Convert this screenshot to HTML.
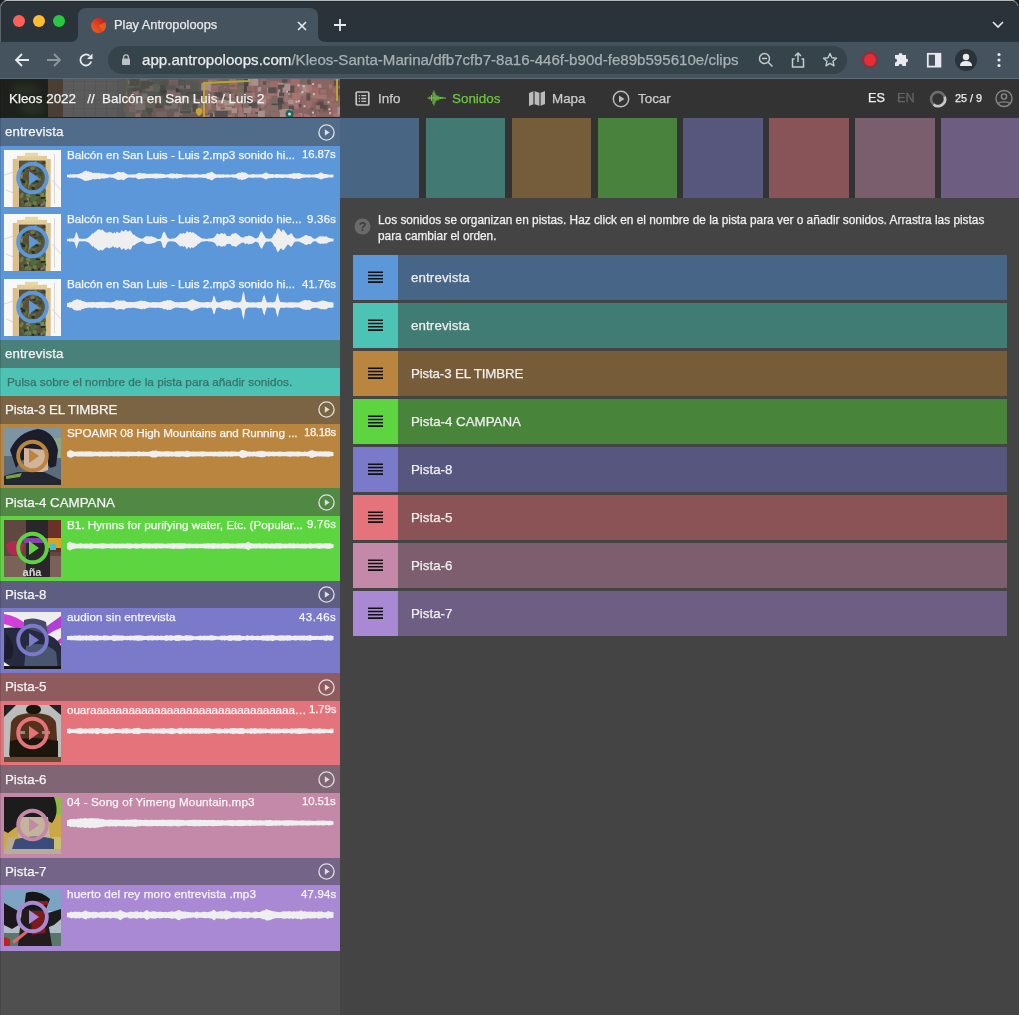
<!DOCTYPE html><html><head><meta charset="utf-8"><style>
*{margin:0;padding:0;box-sizing:border-box}
html,body{width:1019px;height:1015px;overflow:hidden;background:#444;font-family:"Liberation Sans",sans-serif}
.abs{position:absolute}
.t{position:absolute;white-space:nowrap;line-height:1}
body{-webkit-font-smoothing:antialiased}
.t,.tx{will-change:transform;-webkit-text-stroke:0.25px currentColor}
</style></head><body>

<div class="abs" style="left:0;top:0;width:1019px;height:42px;background:#2a3339"></div>
<div class="abs" style="left:0;top:0;width:1019px;height:1px;background:#b3b8bb"></div>
<div class="abs" style="left:0;top:1px;width:1019px;height:1px;background:#222b30"></div>
<div class="abs" style="left:0;top:1px;width:1px;height:77px;background:#5a6469"></div>
<svg class="abs" style="left:0;top:0" width="6" height="6"><path d="M0 0H6Q1 1 0 6Z" fill="#1a1f22"/><path d="M6 1Q1.5 1.5 1 6" stroke="#7d8589" stroke-width="1" fill="none"/></svg>
<svg class="abs" style="left:1013px;top:0" width="6" height="6"><path d="M6 0H0Q5 1 6 6Z" fill="#1a1f22"/><path d="M0 1Q4.5 1.5 5 6" stroke="#7d8589" stroke-width="1" fill="none"/></svg>
<div class="abs" style="left:13px;top:15px;width:12px;height:12px;border-radius:50%;background:#fe5f57"></div>
<div class="abs" style="left:33px;top:15px;width:12px;height:12px;border-radius:50%;background:#febc2e"></div>
<div class="abs" style="left:53px;top:15px;width:12px;height:12px;border-radius:50%;background:#28c840"></div>
<div class="abs" style="left:78px;top:8px;width:240px;height:35px;background:#44535d;border-radius:8px 8px 0 0"></div>
<svg class="abs" style="left:70px;top:34px" width="8" height="8"><path d="M0 8 Q8 8 8 0 L8 8Z" fill="#44535d"/></svg>
<svg class="abs" style="left:318px;top:34px" width="8" height="8"><path d="M8 8 Q0 8 0 0 L0 8Z" fill="#44535d"/></svg>
<svg class="abs" style="left:90.5px;top:17.5px" width="15" height="15"><defs><linearGradient id="fav" x1="1" y1="0" x2="0" y2="1"><stop offset="0" stop-color="#c8141e"/><stop offset="1" stop-color="#f06a1e"/></linearGradient></defs><circle cx="7.5" cy="7.5" r="7.5" fill="url(#fav)"/><path d="M7.5 7.5L14.2 4.2A7.5 7.5 0 0 1 12 13.5Z" fill="#f0641e" opacity="0.8"/></svg>
<div class="t" style="left:114px;top:19px;font-size:12.8px;color:#e8eaed">Play Antropoloops</div>
<svg class="abs" style="left:297px;top:21px" width="10" height="10"><path d="M1 1L9 9M9 1L1 9" stroke="#e8eaed" stroke-width="1.6"/></svg>
<svg class="abs" style="left:334px;top:19px" width="12" height="12"><path d="M6 0V12M0 6H12" stroke="#e8eaed" stroke-width="1.8"/></svg>
<svg class="abs" style="left:992px;top:21px" width="12" height="8"><path d="M1 1L6 6L11 1" stroke="#e8eaed" stroke-width="1.6" fill="none"/></svg>
<div class="abs" style="left:0;top:42px;width:1019px;height:36px;background:#44535d"></div>
<div class="abs" style="left:0;top:78px;width:1019px;height:1px;background:#5d6a72"></div>
<svg class="abs" style="left:14px;top:52px" width="16" height="16"><path d="M15 8H2M8 2L2 8L8 14" stroke="#e8eaed" stroke-width="1.8" fill="none"/></svg>
<svg class="abs" style="left:46px;top:52px" width="16" height="16"><path d="M1 8H14M8 2L14 8L8 14" stroke="#8d989e" stroke-width="1.8" fill="none"/></svg>
<svg class="abs" style="left:78px;top:52px" width="16" height="16"><path d="M13.2 9.5A5.5 5.5 0 1 1 11.5 3.8" stroke="#e8eaed" stroke-width="1.8" fill="none"/><path d="M14.5 1.5V7H9Z" fill="#e8eaed"/></svg>
<div class="abs" style="left:108px;top:46px;width:739px;height:28px;border-radius:14px;background:#35434b"></div>
<svg class="abs" style="left:121px;top:53px" width="10" height="13"><path d="M2.6 6V4.2A2.4 2.4 0 0 1 7.4 4.2V6" stroke="#bcc0c3" stroke-width="1.3" fill="none"/><rect x="1" y="5.5" width="8" height="6.5" rx="0.8" fill="#bcc0c3"/></svg>
<div class="t" style="left:142px;top:52px;font-size:15.1px;color:#e8eaed">app.antropoloops.com<span style="color:#a8b0b5">/Kleos-Santa-Marina/dfb7cfb7-8a16-446f-b90d-fe89b595610e/clips</span></div>
<svg class="abs" style="left:758px;top:52px" width="16" height="16"><circle cx="6.5" cy="6.5" r="5" stroke="#c3c9cc" stroke-width="1.5" fill="none"/><path d="M4 6.5H9M10.2 10.2L14.5 14.5" stroke="#c3c9cc" stroke-width="1.5"/></svg>
<svg class="abs" style="left:790px;top:51px" width="16" height="18"><path d="M5 5L8 2L11 5M8 2V11M4.5 8H2.5V16H13.5V8H11.5" stroke="#c3c9cc" stroke-width="1.5" fill="none"/></svg>
<svg class="abs" style="left:822px;top:52px" width="16" height="16"><path d="M8 1.5L9.9 5.8L14.5 6.2L11 9.2L12 13.8L8 11.4L4 13.8L5 9.2L1.5 6.2L6.1 5.8Z" stroke="#c3c9cc" stroke-width="1.4" fill="none" stroke-linejoin="round"/></svg>
<svg class="abs" style="left:861px;top:51px" width="18" height="18"><circle cx="9" cy="9" r="7.6" fill="none" stroke="#b3202a" stroke-width="1.2"/><circle cx="9" cy="9" r="5.9" fill="#ec2a34"/></svg>
<svg class="abs" style="left:893px;top:50px" width="17" height="17"><path d="M2 5H5.5A2 2 0 1 1 9.5 5H13V8.5A2 2 0 1 1 13 12.5V16H9.5A2 2 0 1 0 5.5 16H2V12.5A2 2 0 1 0 2 8.5Z" fill="#e8eaed"/></svg>
<svg class="abs" style="left:926px;top:52px" width="16" height="16"><rect x="1.8" y="1.8" width="12.6" height="12.8" fill="none" stroke="#e8eaed" stroke-width="1.8"/><rect x="9" y="1.5" width="5.8" height="13.4" fill="#e8eaed"/></svg>
<div class="abs" style="left:955px;top:49px;width:22px;height:22px;border-radius:50%;background:#2a3339"></div>
<svg class="abs" style="left:958px;top:52px" width="16" height="16"><circle cx="8" cy="5" r="3.2" fill="#e8eaed"/><path d="M2 14C2 10 5 9 8 9C11 9 14 10 14 14Z" fill="#e8eaed"/></svg>
<svg class="abs" style="left:996px;top:52px" width="6" height="16"><circle cx="3" cy="2.5" r="1.6" fill="#e8eaed"/><circle cx="3" cy="8" r="1.6" fill="#e8eaed"/><circle cx="3" cy="13.5" r="1.6" fill="#e8eaed"/></svg>
<div class="abs" style="left:0;top:79px;width:1019px;height:39px;background:#333"></div>
<div class="abs" style="left:0;top:79px;width:340px;height:38px;overflow:hidden;background:#6a5a57">
<div class="abs" style="left:0;top:0;width:49px;height:38px;background:#1d201b"></div>
<div class="abs" style="left:10px;top:4px;width:30px;height:14px;border-radius:50%;background:#262d22;filter:blur(3px)"></div>
<div class="abs" style="left:20px;top:22px;width:26px;height:14px;border-radius:50%;background:#283024;filter:blur(3px)"></div>
<div class="abs" style="left:48px;top:0;width:16px;height:38px;background:#4a3e35"></div>
<div class="abs" style="left:63px;top:0;width:56px;height:38px;background:#5b5b5b"></div>
<div class="abs" style="left:63px;top:0;width:56px;height:38px;background:repeating-linear-gradient(90deg,transparent 0 10px,rgba(0,0,0,0.07) 10px 11px),repeating-linear-gradient(0deg,transparent 0 8px,rgba(0,0,0,0.05) 8px 9px)"></div>
<div class="abs" style="left:118px;top:0;width:222px;height:38px;background:#6e5f5b"></div>
<div class="abs" style="left:118px;top:0;width:8px;height:38px;background:#575757"></div>
<div class="abs" style="left:126px;top:0;width:74px;height:20px;background:#545650;filter:blur(2px)"></div>
<div class="abs" style="left:126px;top:20px;width:74px;height:18px;background:#6d5a56;filter:blur(2px)"></div>
<div class="abs" style="left:160px;top:2px;width:20px;height:14px;background:#3e3e3e;filter:blur(1.5px)"></div>
<div class="abs" style="left:204px;top:6px;width:41px;height:32px;background:#7a6a5e;filter:blur(2px)"></div>
<div class="abs" style="left:215px;top:10px;width:16px;height:12px;background:#5a5450;filter:blur(1.5px)"></div>
<div class="abs" style="left:244px;top:0;width:8px;height:38px;background:#474747"></div>
<div class="abs" style="left:252px;top:0;width:40px;height:38px;background:#846664;filter:blur(1px)"></div>
<div class="abs" style="left:292px;top:0;width:48px;height:38px;background:#8e6463;filter:blur(1px)"></div>
<div class="abs" style="left:270px;top:18px;width:14px;height:8px;background:#4c4446;filter:blur(1px)"></div>
<div class="abs" style="left:300px;top:6px;width:10px;height:10px;background:#a89090;filter:blur(1.5px)"></div>
<div class="abs" style="left:316px;top:22px;width:12px;height:10px;background:#5a4848;filter:blur(1.5px)"></div>
<svg class="abs" style="left:0;top:0;opacity:0.8" width="340" height="38"><rect x="260.7" y="-1.0" width="5.2" height="4.3" fill="#8a7068"/><rect x="142.5" y="26.1" width="7.4" height="6.5" fill="#545650"/><rect x="126.6" y="6.3" width="7.0" height="3.2" fill="#606058"/><rect x="277.5" y="24.7" width="6.4" height="5.7" fill="#7a6660"/><rect x="298.1" y="-1.8" width="9.4" height="7.2" fill="#7a6660"/><rect x="181.1" y="6.2" width="9.1" height="3.6" fill="#8d7270"/><rect x="141.3" y="30.2" width="7.8" height="7.8" fill="#787470"/><rect x="221.1" y="2.7" width="10.4" height="3.5" fill="#7a6660"/><rect x="302.5" y="21.5" width="9.9" height="6.5" fill="#8a7068"/><rect x="135.3" y="23.1" width="9.2" height="8.9" fill="#606058"/><rect x="310.6" y="12.4" width="6.6" height="8.0" fill="#a87a76"/><rect x="201.4" y="6.0" width="5.1" height="8.6" fill="#8a7068"/><rect x="135.7" y="22.1" width="7.3" height="4.5" fill="#8d7270"/><rect x="203.5" y="35.6" width="8.1" height="6.3" fill="#8a7068"/><rect x="191.3" y="27.2" width="3.4" height="7.9" fill="#7a6662"/><rect x="208.3" y="0.5" width="10.3" height="6.4" fill="#8a7068"/><rect x="189.2" y="22.9" width="6.2" height="8.5" fill="#8d7270"/><rect x="151.4" y="3.3" width="9.0" height="6.2" fill="#787470"/><rect x="248.6" y="32.1" width="6.2" height="4.3" fill="#a87a76"/><rect x="232.1" y="1.5" width="3.4" height="3.7" fill="#8a7068"/><rect x="155.2" y="23.9" width="7.8" height="5.3" fill="#4a4b44"/><rect x="339.1" y="18.1" width="10.8" height="8.2" fill="#9c6e6c"/><rect x="269.7" y="2.4" width="10.1" height="7.5" fill="#a86c6a"/><rect x="261.0" y="2.2" width="6.5" height="5.7" fill="#8a7068"/><rect x="312.7" y="8.0" width="7.0" height="4.1" fill="#9c6e6c"/><rect x="311.5" y="9.3" width="8.1" height="6.7" fill="#a87a76"/><rect x="202.3" y="4.1" width="10.6" height="8.5" fill="#9c6e6c"/><rect x="251.8" y="16.6" width="3.9" height="5.2" fill="#a86c6a"/><rect x="297.5" y="7.1" width="4.9" height="6.4" fill="#9c6e6c"/><rect x="138.8" y="16.5" width="3.6" height="7.6" fill="#606058"/><rect x="148.2" y="16.1" width="7.4" height="4.6" fill="#4a4b44"/><rect x="213.1" y="6.0" width="7.3" height="7.4" fill="#a87a76"/><rect x="276.8" y="13.2" width="8.4" height="5.2" fill="#b49a94"/><rect x="219.3" y="7.4" width="3.5" height="3.1" fill="#b49a94"/><rect x="170.6" y="6.4" width="3.6" height="6.8" fill="#606058"/><rect x="134.8" y="-0.8" width="5.6" height="6.1" fill="#7a6662"/><rect x="267.2" y="6.1" width="4.1" height="8.6" fill="#b49a94"/><rect x="246.8" y="7.2" width="6.8" height="5.4" fill="#9c6e6c"/><rect x="141.3" y="14.4" width="6.4" height="5.8" fill="#787470"/><rect x="131.9" y="22.8" width="8.2" height="3.4" fill="#787470"/><rect x="194.6" y="30.7" width="5.0" height="4.1" fill="#8d7270"/><rect x="150.8" y="5.0" width="6.7" height="8.2" fill="#545650"/><rect x="217.5" y="30.7" width="7.4" height="3.3" fill="#b49a94"/><rect x="303.9" y="34.8" width="10.4" height="8.1" fill="#a87a76"/><rect x="209.4" y="16.3" width="9.9" height="8.4" fill="#a87a76"/><rect x="203.4" y="35.4" width="5.1" height="7.7" fill="#504a4a"/><rect x="182.8" y="24.5" width="8.8" height="7.7" fill="#787470"/><rect x="278.0" y="3.9" width="5.4" height="8.8" fill="#b49a94"/><rect x="281.9" y="0.3" width="5.5" height="3.3" fill="#504a4a"/><rect x="230.6" y="30.4" width="4.3" height="8.8" fill="#9c6e6c"/><rect x="307.3" y="0.6" width="3.5" height="8.2" fill="#504a4a"/><rect x="146.4" y="31.8" width="5.0" height="6.6" fill="#4a4b44"/><rect x="138.0" y="23.0" width="7.5" height="4.9" fill="#7a6662"/><rect x="164.9" y="25.2" width="4.9" height="5.4" fill="#787470"/><rect x="262.0" y="15.4" width="10.4" height="8.6" fill="#9c6e6c"/><rect x="220.8" y="35.9" width="11.0" height="3.4" fill="#a87a76"/><rect x="231.3" y="3.0" width="5.8" height="3.4" fill="#a87a76"/><rect x="201.3" y="4.0" width="9.7" height="7.2" fill="#b49a94"/><rect x="336.4" y="28.7" width="7.2" height="7.0" fill="#b49a94"/><rect x="185.9" y="23.2" width="10.5" height="3.8" fill="#545650"/><rect x="315.7" y="26.2" width="4.2" height="4.7" fill="#a87a76"/><rect x="277.9" y="5.7" width="8.1" height="4.6" fill="#504a4a"/><rect x="175.2" y="32.5" width="3.4" height="6.8" fill="#7a6662"/><rect x="129.7" y="10.7" width="4.0" height="8.9" fill="#606058"/><rect x="283.1" y="19.0" width="6.4" height="3.1" fill="#9c6e6c"/><rect x="327.9" y="24.3" width="4.2" height="3.2" fill="#7a6660"/><rect x="248.2" y="3.6" width="4.0" height="4.8" fill="#a86c6a"/><rect x="333.9" y="-0.5" width="5.9" height="7.1" fill="#8a7068"/><rect x="142.6" y="27.6" width="10.1" height="5.4" fill="#4a4b44"/><rect x="284.9" y="33.2" width="4.9" height="4.0" fill="#a86c6a"/><rect x="298.4" y="31.5" width="3.2" height="7.4" fill="#7a6660"/><rect x="292.1" y="13.6" width="8.4" height="7.4" fill="#a87a76"/><rect x="178.7" y="27.9" width="3.9" height="8.2" fill="#8d7270"/><rect x="168.9" y="29.0" width="6.7" height="4.8" fill="#606058"/><rect x="169.0" y="23.1" width="6.2" height="4.7" fill="#545650"/><rect x="332.7" y="8.6" width="8.1" height="5.4" fill="#a86c6a"/><rect x="238.0" y="33.7" width="3.9" height="8.8" fill="#a87a76"/><rect x="247.7" y="35.4" width="3.3" height="6.6" fill="#7a6660"/><rect x="280.3" y="9.9" width="7.8" height="6.1" fill="#504a4a"/><rect x="317.9" y="5.2" width="3.4" height="5.6" fill="#b49a94"/><rect x="323.6" y="18.5" width="8.8" height="7.5" fill="#8a7068"/><rect x="163.3" y="14.4" width="10.6" height="8.5" fill="#4a4b44"/><rect x="189.1" y="30.2" width="8.8" height="4.8" fill="#7a6662"/><rect x="266.7" y="10.4" width="8.6" height="6.3" fill="#a87a76"/><rect x="212.5" y="33.7" width="8.4" height="8.4" fill="#b49a94"/><rect x="245.2" y="13.4" width="9.7" height="4.8" fill="#a87a76"/><rect x="214.6" y="20.0" width="8.2" height="5.8" fill="#504a4a"/><rect x="268.6" y="17.4" width="9.3" height="8.8" fill="#8a7068"/><rect x="157.3" y="1.2" width="7.1" height="6.8" fill="#7a6662"/><rect x="140.5" y="34.2" width="4.9" height="4.9" fill="#606058"/><rect x="152.4" y="-0.2" width="10.9" height="6.7" fill="#545650"/><rect x="220.2" y="31.7" width="7.6" height="7.3" fill="#504a4a"/><rect x="228.8" y="7.3" width="8.2" height="3.0" fill="#a86c6a"/><rect x="309.3" y="31.6" width="9.2" height="4.3" fill="#a86c6a"/><rect x="330.8" y="17.7" width="3.4" height="4.5" fill="#a86c6a"/><rect x="146.7" y="3.1" width="6.7" height="6.2" fill="#4a4b44"/><rect x="251.0" y="34.1" width="10.1" height="6.7" fill="#8a7068"/><rect x="316.2" y="14.2" width="10.3" height="5.7" fill="#a87a76"/><rect x="283.6" y="16.0" width="5.1" height="4.5" fill="#8a7068"/><rect x="181.0" y="27.6" width="6.9" height="4.4" fill="#8d7270"/><rect x="137.0" y="8.9" width="5.2" height="4.9" fill="#4a4b44"/><rect x="137.7" y="3.7" width="6.1" height="3.9" fill="#606058"/><rect x="134.1" y="13.5" width="7.3" height="5.5" fill="#606058"/><rect x="303.2" y="12.8" width="9.2" height="8.7" fill="#9c6e6c"/><rect x="308.5" y="27.1" width="6.0" height="3.0" fill="#7a6660"/><rect x="185.7" y="12.8" width="10.1" height="8.0" fill="#4a4b44"/><rect x="284.5" y="18.8" width="7.8" height="4.3" fill="#a87a76"/><rect x="180.0" y="16.5" width="6.1" height="7.0" fill="#8d7270"/><rect x="279.3" y="29.9" width="10.4" height="8.9" fill="#b49a94"/><rect x="125.9" y="13.0" width="7.5" height="3.2" fill="#787470"/><rect x="214.3" y="30.9" width="4.5" height="4.6" fill="#7a6660"/><rect x="166.6" y="10.4" width="9.1" height="5.3" fill="#8d7270"/><rect x="175.5" y="1.1" width="3.2" height="6.2" fill="#7a6662"/><rect x="169.3" y="0.6" width="10.7" height="3.2" fill="#545650"/><rect x="328.9" y="5.6" width="3.2" height="3.9" fill="#a87a76"/><rect x="224.2" y="2.3" width="10.6" height="5.8" fill="#7a6660"/><rect x="288.7" y="4.4" width="7.9" height="7.5" fill="#9c6e6c"/><rect x="291.1" y="4.2" width="5.5" height="6.5" fill="#7a6660"/><rect x="246.7" y="32.5" width="6.0" height="8.6" fill="#a87a76"/><rect x="136.7" y="24.2" width="8.0" height="3.6" fill="#7a6662"/><rect x="307.1" y="20.8" width="4.0" height="8.9" fill="#a86c6a"/><rect x="129.0" y="18.2" width="8.3" height="3.4" fill="#787470"/><rect x="195.1" y="30.3" width="9.6" height="3.6" fill="#7a6662"/><rect x="259.8" y="29.5" width="8.7" height="5.6" fill="#8a7068"/><rect x="234.8" y="22.7" width="7.9" height="8.5" fill="#a86c6a"/><rect x="226.4" y="14.6" width="8.8" height="4.6" fill="#a86c6a"/><rect x="174.0" y="33.5" width="5.2" height="5.7" fill="#8d7270"/><rect x="245.4" y="23.4" width="5.7" height="6.0" fill="#7a6660"/><rect x="160.0" y="6.1" width="9.4" height="5.0" fill="#4a4b44"/><rect x="274.3" y="8.5" width="3.1" height="8.7" fill="#9c6e6c"/><rect x="173.1" y="13.4" width="7.4" height="4.4" fill="#8d7270"/><rect x="262.1" y="16.7" width="9.3" height="3.6" fill="#a87a76"/><rect x="209.0" y="7.2" width="8.3" height="5.2" fill="#b49a94"/><rect x="236.8" y="14.2" width="9.0" height="5.0" fill="#8a7068"/><rect x="219.8" y="9.7" width="4.8" height="7.3" fill="#7a6660"/><rect x="146.3" y="18.4" width="9.1" height="4.1" fill="#606058"/><rect x="282.5" y="8.5" width="7.7" height="7.6" fill="#b49a94"/><rect x="182.3" y="1.8" width="4.6" height="4.4" fill="#606058"/><rect x="186.5" y="24.9" width="4.0" height="3.3" fill="#545650"/><rect x="241.7" y="24.5" width="4.0" height="8.2" fill="#504a4a"/><rect x="142.6" y="-1.5" width="5.3" height="5.9" fill="#7a6662"/><rect x="160.6" y="-0.0" width="10.5" height="5.9" fill="#545650"/><rect x="208.2" y="0.8" width="8.0" height="3.3" fill="#a87a76"/><rect x="298.5" y="34.1" width="3.7" height="4.5" fill="#b49a94"/><rect x="288.2" y="21.0" width="9.3" height="4.4" fill="#b49a94"/><rect x="203.7" y="32.5" width="5.4" height="6.5" fill="#504a4a"/><rect x="187.2" y="21.6" width="7.9" height="7.4" fill="#606058"/><rect x="257.6" y="8.1" width="3.6" height="4.4" fill="#b49a94"/><rect x="136.5" y="-1.9" width="6.6" height="6.6" fill="#7a6662"/><rect x="127.2" y="8.9" width="5.3" height="8.2" fill="#545650"/><rect x="271.2" y="33.1" width="9.3" height="6.8" fill="#8a7068"/><rect x="296.9" y="5.5" width="3.9" height="4.3" fill="#a87a76"/><rect x="319.9" y="29.4" width="3.6" height="4.0" fill="#7a6660"/><rect x="250.9" y="29.3" width="10.4" height="5.6" fill="#504a4a"/><rect x="271.5" y="24.6" width="10.5" height="6.0" fill="#504a4a"/><rect x="216.3" y="20.7" width="10.1" height="7.4" fill="#b49a94"/><rect x="175.1" y="1.5" width="10.7" height="8.0" fill="#4a4b44"/><rect x="249.2" y="-1.2" width="9.1" height="7.9" fill="#b49a94"/><rect x="128.9" y="26.7" width="6.8" height="6.9" fill="#7a6662"/><rect x="159.9" y="20.2" width="8.1" height="6.0" fill="#545650"/><rect x="223.4" y="13.5" width="5.6" height="3.6" fill="#a87a76"/><rect x="192.6" y="24.4" width="5.3" height="8.7" fill="#4a4b44"/><rect x="128.1" y="1.3" width="5.0" height="3.7" fill="#8d7270"/><rect x="310.3" y="29.3" width="3.0" height="8.2" fill="#504a4a"/><rect x="210.9" y="5.1" width="5.9" height="7.5" fill="#8a7068"/><rect x="217.2" y="-0.0" width="5.1" height="3.8" fill="#7a6660"/><rect x="216.4" y="24.5" width="4.0" height="8.8" fill="#b49a94"/><rect x="295.8" y="25.0" width="5.5" height="3.1" fill="#504a4a"/><rect x="140.5" y="35.7" width="10.3" height="5.8" fill="#545650"/><rect x="262.5" y="3.9" width="10.5" height="4.8" fill="#8a7068"/><rect x="180.2" y="29.7" width="10.8" height="4.5" fill="#4a4b44"/><rect x="151.8" y="5.2" width="7.8" height="7.5" fill="#606058"/><rect x="310.1" y="8.5" width="9.3" height="5.5" fill="#a86c6a"/><rect x="231.7" y="29.2" width="5.3" height="4.8" fill="#b49a94"/><rect x="247.6" y="23.1" width="9.9" height="5.7" fill="#504a4a"/><rect x="195.9" y="19.0" width="7.3" height="5.7" fill="#7a6662"/><rect x="311.3" y="35.3" width="4.9" height="5.3" fill="#a86c6a"/><rect x="290.6" y="-0.3" width="9.0" height="7.2" fill="#a86c6a"/><rect x="203.9" y="35.6" width="9.3" height="6.9" fill="#a87a76"/><rect x="229.0" y="-0.6" width="7.0" height="6.5" fill="#a86c6a"/><rect x="142.1" y="30.1" width="3.8" height="8.5" fill="#545650"/><rect x="278.9" y="13.6" width="8.2" height="3.9" fill="#504a4a"/><rect x="291.9" y="8.1" width="8.0" height="5.4" fill="#9c6e6c"/><rect x="307.4" y="30.4" width="9.9" height="5.3" fill="#7a6660"/><rect x="257.9" y="31.7" width="6.9" height="6.2" fill="#b49a94"/><rect x="135.1" y="22.0" width="10.4" height="9.0" fill="#787470"/><rect x="139.9" y="35.2" width="9.1" height="7.2" fill="#545650"/><rect x="217.6" y="24.4" width="10.2" height="3.3" fill="#a86c6a"/><rect x="132.3" y="11.6" width="6.4" height="4.5" fill="#8d7270"/><rect x="244.5" y="28.1" width="4.4" height="3.5" fill="#a86c6a"/><rect x="204.2" y="24.0" width="7.0" height="6.5" fill="#a87a76"/><rect x="221.5" y="7.7" width="5.0" height="3.1" fill="#a86c6a"/><rect x="222.4" y="8.9" width="7.4" height="3.4" fill="#7a6660"/><rect x="337.3" y="9.4" width="10.7" height="7.1" fill="#504a4a"/><rect x="306.0" y="5.6" width="6.1" height="5.9" fill="#a87a76"/><rect x="203.9" y="11.6" width="5.4" height="7.2" fill="#9c6e6c"/><rect x="335.1" y="23.0" width="5.2" height="6.4" fill="#8a7068"/><rect x="291.2" y="35.0" width="10.3" height="7.5" fill="#a86c6a"/><rect x="318.9" y="8.9" width="9.4" height="6.6" fill="#7a6660"/><rect x="168.2" y="5.2" width="5.0" height="7.5" fill="#787470"/><rect x="269.8" y="3.2" width="3.8" height="6.8" fill="#9c6e6c"/><rect x="188.0" y="14.8" width="7.6" height="7.4" fill="#545650"/><rect x="320.1" y="10.4" width="6.3" height="4.2" fill="#a86c6a"/><rect x="238.7" y="34.9" width="7.2" height="8.5" fill="#a86c6a"/><rect x="156.2" y="32.7" width="10.6" height="8.8" fill="#7a6662"/><rect x="284.2" y="10.9" width="3.9" height="8.8" fill="#a87a76"/><rect x="285.9" y="6.6" width="8.4" height="7.0" fill="#504a4a"/><rect x="332.8" y="28.6" width="5.9" height="7.7" fill="#9c6e6c"/><rect x="178.2" y="2.7" width="5.9" height="7.5" fill="#7a6662"/><rect x="248.6" y="29.3" width="10.5" height="3.7" fill="#a87a76"/><rect x="223.7" y="21.5" width="10.5" height="5.0" fill="#b49a94"/><rect x="168.7" y="0.4" width="9.6" height="8.5" fill="#7a6662"/><rect x="262.8" y="2.4" width="3.4" height="3.2" fill="#504a4a"/><rect x="145.5" y="6.9" width="7.3" height="5.3" fill="#7a6662"/><rect x="267.5" y="26.2" width="10.6" height="5.5" fill="#8a7068"/><rect x="279.9" y="31.6" width="8.2" height="8.0" fill="#b49a94"/><rect x="209.8" y="34.2" width="3.3" height="5.2" fill="#504a4a"/><rect x="217.8" y="7.0" width="5.9" height="8.9" fill="#7a6660"/><rect x="239.8" y="35.2" width="5.9" height="5.4" fill="#a87a76"/><rect x="333.0" y="34.1" width="9.6" height="3.6" fill="#a87a76"/><rect x="261.2" y="20.7" width="3.2" height="7.7" fill="#a87a76"/><rect x="337.5" y="27.9" width="4.6" height="8.0" fill="#b49a94"/><rect x="165.6" y="6.2" width="10.0" height="5.0" fill="#606058"/><rect x="293.5" y="20.6" width="5.2" height="8.9" fill="#a87a76"/><rect x="238.8" y="28.3" width="3.9" height="8.2" fill="#a87a76"/><rect x="123.3" y="28.0" width="4.9" height="4.9" fill="#606058"/><rect x="178.4" y="2.8" width="6.4" height="3.7" fill="#545650"/><rect x="224.8" y="27.6" width="7.1" height="3.7" fill="#b49a94"/><rect x="168.7" y="21.4" width="8.8" height="8.5" fill="#787470"/><rect x="234.7" y="15.4" width="10.7" height="3.4" fill="#504a4a"/><rect x="306.4" y="14.2" width="3.9" height="7.3" fill="#504a4a"/><rect x="136.2" y="1.1" width="7.9" height="3.4" fill="#7a6662"/><rect x="257.3" y="20.2" width="8.7" height="5.3" fill="#b49a94"/><rect x="236.7" y="15.2" width="7.8" height="3.6" fill="#8a7068"/><rect x="145.2" y="22.9" width="10.0" height="6.3" fill="#606058"/><rect x="214.6" y="31.7" width="6.3" height="8.0" fill="#504a4a"/><rect x="211.5" y="1.6" width="6.4" height="7.0" fill="#7a6660"/><rect x="329.8" y="24.1" width="6.8" height="3.5" fill="#9c6e6c"/><rect x="140.5" y="1.7" width="8.9" height="7.9" fill="#4a4b44"/><rect x="133.2" y="34.4" width="7.5" height="7.0" fill="#8d7270"/><rect x="197.8" y="23.3" width="9.0" height="8.2" fill="#787470"/><rect x="131.3" y="8.9" width="5.5" height="3.6" fill="#4a4b44"/><rect x="166.8" y="23.0" width="4.8" height="3.6" fill="#4a4b44"/><rect x="200.9" y="27.0" width="7.6" height="7.8" fill="#a86c6a"/><rect x="243.4" y="27.2" width="8.0" height="7.0" fill="#b49a94"/><rect x="125.8" y="33.3" width="9.6" height="4.6" fill="#606058"/><rect x="180.1" y="27.0" width="10.4" height="5.1" fill="#606058"/><rect x="311.4" y="19.5" width="6.2" height="3.9" fill="#8a7068"/><rect x="333.8" y="1.5" width="7.2" height="5.3" fill="#504a4a"/><rect x="195.0" y="12.1" width="8.8" height="7.7" fill="#4a4b44"/><rect x="251.2" y="31.6" width="4.2" height="7.5" fill="#9c6e6c"/><rect x="268.3" y="8.3" width="8.3" height="5.9" fill="#504a4a"/><rect x="211.1" y="6.2" width="7.1" height="5.1" fill="#9c6e6c"/><rect x="182.3" y="23.8" width="6.9" height="7.0" fill="#545650"/><rect x="168.5" y="35.4" width="3.4" height="4.2" fill="#606058"/><rect x="288.8" y="27.0" width="5.3" height="3.7" fill="#504a4a"/><rect x="284.3" y="4.7" width="6.0" height="7.2" fill="#b49a94"/><rect x="242.9" y="23.4" width="5.8" height="5.4" fill="#8a7068"/><rect x="129.3" y="-1.3" width="10.4" height="8.2" fill="#4a4b44"/><rect x="214.4" y="13.4" width="8.1" height="4.7" fill="#504a4a"/><rect x="286.1" y="11.7" width="2" height="2" fill="#d8d0d0"/><rect x="327.5" y="22.3" width="2" height="2" fill="#d8d0d0"/><rect x="329.1" y="33.1" width="2" height="2" fill="#d8d0d0"/><rect x="289.7" y="30.4" width="2" height="2" fill="#d8d0d0"/><rect x="297.9" y="21.2" width="2" height="2" fill="#d8d0d0"/><rect x="312.8" y="14.2" width="2" height="2" fill="#d8d0d0"/><rect x="301.4" y="12.2" width="2" height="2" fill="#d8d0d0"/><rect x="302.7" y="6.1" width="2" height="2" fill="#d8d0d0"/><rect x="312.1" y="4.1" width="2" height="2" fill="#d8d0d0"/><rect x="312.0" y="32.6" width="2" height="2" fill="#d8d0d0"/><rect x="303.5" y="26.2" width="2" height="2" fill="#d8d0d0"/><rect x="328.4" y="29.3" width="2" height="2" fill="#d8d0d0"/><rect x="297.5" y="5.3" width="2" height="2" fill="#d8d0d0"/><rect x="295.5" y="21.7" width="2" height="2" fill="#d8d0d0"/></svg><svg class="abs" style="left:0;top:0" width="340" height="38"><path d="M204 38V4L249 2V0" stroke="#b9a22e" stroke-width="2" fill="none"/><path d="M337 0V22" stroke="#b9a22e" stroke-width="2"/><path d="M199 29a3.2 3.2 0 0 1 3.2 3.2c0 2.5-3.2 5-3.2 5s-3.2-2.5-3.2-5a3.2 3.2 0 0 1 3.2-3.2z" fill="#c9a62a"/><circle cx="289.5" cy="35" r="4" fill="#1c6a5a"/><circle cx="289.5" cy="35" r="1.5" fill="#ddd"/></svg>
</div>
<div class="abs" style="left:0;top:117px;width:340px;height:1px;background:#222"></div>
<div class="t" style="left:9px;top:92px;font-size:13.4px;color:#f2f2f2">Kleos 2022&nbsp;&nbsp; //&nbsp; Balcón en San Luis / Luis 2</div>
<svg class="abs" style="left:354px;top:90px" width="17" height="17"><rect x="2.2" y="2" width="12.6" height="13" rx="1" stroke="#c4c4c4" stroke-width="1.7" fill="none"/><path d="M4.8 5.6H6M4.8 8.5H6M4.8 11.4H6M7.3 5.6H12.2M7.3 8.5H12.2M7.3 11.4H12.2" stroke="#c4c4c4" stroke-width="1.3"/></svg>
<div class="t" style="left:378px;top:92px;font-size:13.4px;color:#ccc">Info</div>
<svg class="abs" style="left:427px;top:90px" width="19" height="16"><path d="M0.5 8H19" stroke="#6ec43e" stroke-width="1"/><path d="M3 6.5V9.5M4.5 5V11M6 2.5V14M7 0.5V15.5M8 3V13M9 5V11M10 6V10M11 5.5V10.5M12 6.5V9.5M13.5 7V9M15 6.8V9" stroke="#6ec43e" stroke-width="1"/></svg>
<div class="t" style="left:452px;top:92px;font-size:13.4px;color:#70c640">Sonidos</div>
<svg class="abs" style="left:528px;top:90px" width="18" height="17"><path d="M1 3L6 1L12 3L17 1V14L12 16L6 14L1 16Z" fill="#bbb"/><path d="M6 1V14M12 3V16" stroke="#333" stroke-width="1.2"/></svg>
<div class="t" style="left:552px;top:92px;font-size:13.4px;color:#ccc">Mapa</div>
<svg class="abs" style="left:612px;top:90px" width="18" height="18"><circle cx="9" cy="9" r="7.7" stroke="#bbb" stroke-width="1.5" fill="none"/><path d="M7 5.5L12.5 9L7 12.5Z" fill="#bbb"/></svg>
<div class="t" style="left:638px;top:92px;font-size:13.4px;color:#ccc">Tocar</div>
<div class="t" style="left:868px;top:92px;font-size:12.6px;color:#f0f0f0">ES</div>
<div class="t" style="left:897px;top:92px;font-size:12.6px;color:#666">EN</div>
<svg class="abs" style="left:929px;top:90px" width="18" height="18"><circle cx="9" cy="9" r="7" stroke="#6e6e6e" stroke-width="2.6" fill="none"/><path d="M15.6 6.6A7 7 0 0 1 4.5 14.4" stroke="#c8c8c8" stroke-width="2.6" fill="none"/></svg>
<div class="t" style="left:955px;top:93px;font-size:10.8px;color:#eee">25 / 9</div>
<svg class="abs" style="left:995px;top:89px" width="18" height="19"><circle cx="9" cy="9.5" r="8" stroke="#888" stroke-width="1.4" fill="none"/><circle cx="9" cy="7.5" r="2.6" stroke="#888" stroke-width="1.4" fill="none"/><path d="M3.5 14.5C5 12.3 13 12.3 14.5 14.5" stroke="#888" stroke-width="1.4" fill="none"/></svg>
<div class="abs" style="left:340px;top:118px;width:679px;height:80px;background:#333"></div>
<div class="abs" style="left:340.00px;top:118px;width:79.4px;height:80px;background:#486584"></div>
<div class="abs" style="left:425.86px;top:118px;width:79.4px;height:80px;background:#427973"></div>
<div class="abs" style="left:511.71px;top:118px;width:79.4px;height:80px;background:#755c3b"></div>
<div class="abs" style="left:597.57px;top:118px;width:79.4px;height:80px;background:#49823c"></div>
<div class="abs" style="left:683.43px;top:118px;width:79.4px;height:80px;background:#57577d"></div>
<div class="abs" style="left:769.28px;top:118px;width:79.4px;height:80px;background:#895457"></div>
<div class="abs" style="left:855.14px;top:118px;width:79.4px;height:80px;background:#7a5e6d"></div>
<div class="abs" style="left:941.00px;top:118px;width:79.4px;height:80px;background:#6d5e81"></div>
<svg class="abs" style="left:354px;top:218px" width="17" height="17"><circle cx="8.5" cy="8.5" r="8" fill="#6a6a6a"/><text x="8.5" y="13" text-anchor="middle" font-size="12.5" font-weight="bold" fill="#3c3c3c" font-family="Liberation Sans">?</text></svg>
<div class="abs tx" style="left:378px;top:212px;width:640px;font-size:11.85px;line-height:16px;color:#f0f0f0">Los sonidos se organizan en pistas. Haz click en el nombre de la pista para ver o añadir sonidos. Arrastra las pistas<br>para cambiar el orden.</div>
<div class="abs" style="left:353px;top:255px;width:45px;height:45px;background:#5b97d9"></div>
<div class="abs" style="left:398px;top:255px;width:609px;height:45px;background:#476586"></div>
<svg class="abs" style="left:368px;top:271px" width="15" height="13"><path d="M0 1.2H15M0 4.5H15M0 7.8H15M0 11.1H15" stroke="#111" stroke-width="1.6"/></svg>
<div class="t" style="left:410.5px;top:271px;font-size:13.3px;letter-spacing:0.12px;color:#f0f0f0">entrevista</div>
<div class="abs" style="left:353px;top:303px;width:45px;height:45px;background:#4dc3b6"></div>
<div class="abs" style="left:398px;top:303px;width:609px;height:45px;background:#407b74"></div>
<svg class="abs" style="left:368px;top:319px" width="15" height="13"><path d="M0 1.2H15M0 4.5H15M0 7.8H15M0 11.1H15" stroke="#111" stroke-width="1.6"/></svg>
<div class="t" style="left:410.5px;top:319px;font-size:13.3px;letter-spacing:0.12px;color:#f0f0f0">entrevista</div>
<div class="abs" style="left:353px;top:351px;width:45px;height:45px;background:#b9853f"></div>
<div class="abs" style="left:398px;top:351px;width:609px;height:45px;background:#765c39"></div>
<svg class="abs" style="left:368px;top:367px" width="15" height="13"><path d="M0 1.2H15M0 4.5H15M0 7.8H15M0 11.1H15" stroke="#111" stroke-width="1.6"/></svg>
<div class="t" style="left:410.5px;top:367px;font-size:13.3px;letter-spacing:-0.14px;color:#f0f0f0">Pista-3 EL TIMBRE</div>
<div class="abs" style="left:353px;top:399px;width:45px;height:45px;background:#5dd540"></div>
<div class="abs" style="left:398px;top:399px;width:609px;height:45px;background:#48843a"></div>
<svg class="abs" style="left:368px;top:415px" width="15" height="13"><path d="M0 1.2H15M0 4.5H15M0 7.8H15M0 11.1H15" stroke="#111" stroke-width="1.6"/></svg>
<div class="t" style="left:410.5px;top:415px;font-size:13.3px;letter-spacing:0px;color:#f0f0f0">Pista-4 CAMPANA</div>
<div class="abs" style="left:353px;top:447px;width:45px;height:45px;background:#7a79ca"></div>
<div class="abs" style="left:398px;top:447px;width:609px;height:45px;background:#56567e"></div>
<svg class="abs" style="left:368px;top:463px" width="15" height="13"><path d="M0 1.2H15M0 4.5H15M0 7.8H15M0 11.1H15" stroke="#111" stroke-width="1.6"/></svg>
<div class="t" style="left:410.5px;top:463px;font-size:13.3px;letter-spacing:0px;color:#f0f0f0">Pista-8</div>
<div class="abs" style="left:353px;top:495px;width:45px;height:45px;background:#e5737b"></div>
<div class="abs" style="left:398px;top:495px;width:609px;height:45px;background:#8c5357"></div>
<svg class="abs" style="left:368px;top:511px" width="15" height="13"><path d="M0 1.2H15M0 4.5H15M0 7.8H15M0 11.1H15" stroke="#111" stroke-width="1.6"/></svg>
<div class="t" style="left:410.5px;top:511px;font-size:13.3px;letter-spacing:0px;color:#f0f0f0">Pista-5</div>
<div class="abs" style="left:353px;top:543px;width:45px;height:45px;background:#c489a8"></div>
<div class="abs" style="left:398px;top:543px;width:609px;height:45px;background:#7c5e6e"></div>
<svg class="abs" style="left:368px;top:559px" width="15" height="13"><path d="M0 1.2H15M0 4.5H15M0 7.8H15M0 11.1H15" stroke="#111" stroke-width="1.6"/></svg>
<div class="t" style="left:410.5px;top:559px;font-size:13.3px;letter-spacing:0px;color:#f0f0f0">Pista-6</div>
<div class="abs" style="left:353px;top:591px;width:45px;height:45px;background:#a989d4"></div>
<div class="abs" style="left:398px;top:591px;width:609px;height:45px;background:#6e5e84"></div>
<svg class="abs" style="left:368px;top:607px" width="15" height="13"><path d="M0 1.2H15M0 4.5H15M0 7.8H15M0 11.1H15" stroke="#111" stroke-width="1.6"/></svg>
<div class="t" style="left:410.5px;top:607px;font-size:13.3px;letter-spacing:0px;color:#f0f0f0">Pista-7</div>
<div class="abs" style="left:0;top:118px;width:340px;height:897px;background:#4f4f4f"></div>
<div class="abs" style="left:0;top:118.00px;width:340px;height:28.07px;background:#506c8a"></div>
<div class="t" style="left:4.6px;top:125.40px;font-size:13.3px;letter-spacing:0.08px;color:#f4f4f4">entrevista</div>
<svg class="abs" style="left:317px;top:122.50px" width="19" height="19"><circle cx="9.5" cy="9.5" r="7.6" stroke="#dedede" stroke-width="1.35" fill="none"/><path d="M7.8 6.3L12.6 9.5L7.8 12.7Z" fill="#dedede"/></svg>
<div class="abs" style="left:0;top:145.67px;width:340px;height:65.12px;background:#5b97d9"></div>
<svg class="abs" style="left:4px;top:149.67px" width="57" height="57" viewBox="0 0 57 57" preserveAspectRatio="none"><defs><filter id="bl00"><feGaussianBlur stdDeviation="0.7"/></filter></defs><g filter="url(#bl00)"><rect width="57" height="57" fill="#f8f8f6"/><path d="M0 25L10 22M2 40L12 44M48 30L57 40" stroke="#c8c0c0" stroke-width="0.6"/><rect x="50" y="4" width="1" height="50" fill="#d8d8d8"/><rect x="8.7" y="9" width="38" height="48" fill="#d9c08e"/><rect x="13" y="5.8" width="30" height="5" fill="#e2cc98"/><rect x="21" y="2.8" width="13" height="4" fill="#e8d6a6"/><rect x="15" y="10.6" width="26.5" height="47" fill="#55523a"/><rect x="25.9" y="35.5" width="3.8" height="2.7" fill="#4c6c3c"/><rect x="19.4" y="33.3" width="3.1" height="3.5" fill="#6a6a48"/><rect x="25.7" y="16.9" width="2.8" height="3.7" fill="#3c4a2c"/><rect x="29.3" y="28.2" width="2.6" height="3.3" fill="#8a3a30"/><rect x="30.0" y="47.5" width="1.7" height="1.6" fill="#4c6c3c"/><rect x="29.4" y="45.1" width="2.3" height="3.0" fill="#4c6c3c"/><rect x="27.5" y="39.0" width="2.7" height="3.2" fill="#6c7c4c"/><rect x="30.7" y="28.7" width="2.9" height="3.8" fill="#6a6a48"/><rect x="32.0" y="24.6" width="2.1" height="2.2" fill="#6a6a48"/><rect x="28.5" y="15.4" width="1.8" height="2.2" fill="#6a6a48"/><rect x="38.0" y="48.2" width="1.5" height="2.0" fill="#6a6a48"/><rect x="26.3" y="54.1" width="2.5" height="1.7" fill="#4c6c3c"/><rect x="33.7" y="22.6" width="1.7" height="2.3" fill="#5a4a3a"/><rect x="33.2" y="15.8" width="2.1" height="1.8" fill="#3c4a2c"/><rect x="26.2" y="32.2" width="3.2" height="2.0" fill="#4c6c3c"/><rect x="38.6" y="44.8" width="2.5" height="2.5" fill="#6c7c4c"/><rect x="25.1" y="20.1" width="2.2" height="3.9" fill="#2c2c22"/><rect x="38.9" y="11.5" width="2.0" height="4.0" fill="#6a6a48"/><rect x="16.0" y="17.1" width="2.6" height="1.5" fill="#7a8a5a"/><rect x="34.9" y="27.7" width="1.7" height="2.0" fill="#4c6c3c"/><rect x="15.4" y="27.0" width="3.1" height="1.8" fill="#6c7c4c"/><rect x="35.0" y="16.6" width="2.5" height="3.1" fill="#2c2c22"/><rect x="36.8" y="46.9" width="2.1" height="2.0" fill="#2c2c22"/><rect x="19.7" y="52.8" width="3.7" height="3.0" fill="#6c7c4c"/><rect x="16.1" y="15.4" width="2.8" height="2.1" fill="#5a4a3a"/><rect x="21.2" y="47.2" width="3.0" height="2.2" fill="#4c6c3c"/><rect x="37.3" y="54.0" width="1.8" height="2.7" fill="#2c2c22"/><rect x="29.7" y="23.0" width="3.8" height="2.0" fill="#3c4a2c"/><rect x="16.7" y="28.9" width="2.1" height="1.6" fill="#2c2c22"/><rect x="23.9" y="36.0" width="1.8" height="2.4" fill="#6c7c4c"/><rect x="38.5" y="39.8" width="3.2" height="3.0" fill="#4c6c3c"/><rect x="29.2" y="51.6" width="2.7" height="2.4" fill="#7a8a5a"/><rect x="38.1" y="11.5" width="3.1" height="2.7" fill="#2c2c22"/><rect x="22.7" y="55.0" width="1.7" height="2.9" fill="#6a6a48"/><rect x="36.6" y="43.3" width="3.3" height="3.5" fill="#7a8a5a"/><rect x="23.4" y="41.0" width="3.8" height="3.7" fill="#6c7c4c"/><rect x="37.7" y="11.9" width="2.7" height="1.5" fill="#5a4a3a"/><rect x="24.1" y="11.2" width="1.7" height="1.7" fill="#6a6a48"/><rect x="38.8" y="49.7" width="3.3" height="2.5" fill="#2c2c22"/><rect x="26.0" y="31.1" width="2.9" height="2.8" fill="#3c4a2c"/><rect x="22.4" y="14.5" width="1.6" height="3.9" fill="#6a6a48"/><rect x="26.9" y="37.9" width="3.8" height="2.1" fill="#3c4a2c"/><rect x="23.8" y="17.0" width="3.0" height="2.8" fill="#7a8a5a"/><rect x="30.8" y="30.2" width="3.7" height="2.3" fill="#2c2c22"/><rect x="19.8" y="29.7" width="3.5" height="3.8" fill="#4c6c3c"/><rect x="24.2" y="36.5" width="2.3" height="1.8" fill="#6c7c4c"/><rect x="23.4" y="50.4" width="1.6" height="1.7" fill="#7a8a5a"/><rect x="34.7" y="15.6" width="2.7" height="3.8" fill="#5a4a3a"/><rect x="24.2" y="33.7" width="3.2" height="3.3" fill="#6c7c4c"/><rect x="22.7" y="47.4" width="2.2" height="3.0" fill="#7a8a5a"/><rect x="28.7" y="24.3" width="3.5" height="1.5" fill="#8a3a30"/><rect x="24.7" y="19.0" width="3.4" height="2.2" fill="#8a3a30"/><rect x="34.1" y="54.3" width="1.8" height="1.8" fill="#2c2c22"/><rect x="30.7" y="46.4" width="3.9" height="3.2" fill="#4c6c3c"/><rect x="34.8" y="22.0" width="3.3" height="3.4" fill="#3c4a2c"/><rect x="19.3" y="22.7" width="2.4" height="3.2" fill="#8a3a30"/><rect x="24.4" y="45.8" width="3.8" height="1.7" fill="#6c7c4c"/><rect x="18.1" y="30.7" width="3.1" height="3.8" fill="#5a4a3a"/><rect x="28.2" y="39.6" width="2.8" height="3.5" fill="#7a8a5a"/><rect x="26.1" y="39.5" width="2.0" height="3.3" fill="#6a6a48"/><rect x="20.1" y="50.6" width="4.0" height="3.9" fill="#2c2c22"/><rect x="38.4" y="52.0" width="2.2" height="3.3" fill="#6a6a48"/><rect x="23.4" y="14.3" width="2.6" height="2.9" fill="#2c2c22"/><rect x="26.7" y="11.9" width="3.5" height="1.7" fill="#3c4a2c"/><rect x="19.1" y="25.5" width="3.5" height="1.9" fill="#8a3a30"/><rect x="39.0" y="50.6" width="2.8" height="3.2" fill="#6c7c4c"/><rect x="37.7" y="32.5" width="3.9" height="1.7" fill="#4c6c3c"/><rect x="25.5" y="35.4" width="3.6" height="2.9" fill="#8a3a30"/><rect x="27.5" y="48.1" width="2.9" height="2.3" fill="#6c7c4c"/><rect x="37.9" y="49.2" width="3.0" height="2.3" fill="#4c6c3c"/><rect x="38.2" y="33.9" width="2.9" height="2.0" fill="#6a6a48"/><rect x="27.1" y="37.5" width="1.6" height="3.9" fill="#5a4a3a"/><rect x="28.1" y="54.5" width="1.8" height="1.7" fill="#4c6c3c"/><rect x="16.6" y="34.5" width="2.5" height="3.9" fill="#5a4a3a"/><rect x="21.5" y="31.6" width="1.8" height="2.6" fill="#6c7c4c"/><rect x="27.6" y="15.4" width="2.5" height="1.6" fill="#2c2c22"/><rect x="18.1" y="45.2" width="1.6" height="2.0" fill="#4c6c3c"/><rect x="15.3" y="23.2" width="3.3" height="2.1" fill="#6c7c4c"/><rect x="17.5" y="43.1" width="1.8" height="2.8" fill="#7a8a5a"/><rect x="32.2" y="41.7" width="3.7" height="1.6" fill="#6c7c4c"/><rect x="34.8" y="37.9" width="2.8" height="3.7" fill="#4c6c3c"/><rect x="27.7" y="48.4" width="3.0" height="3.6" fill="#4c6c3c"/><rect x="37.0" y="38.5" width="2.4" height="2.0" fill="#2c2c22"/><rect x="22.6" y="51.6" width="2.0" height="4.0" fill="#6a6a48"/><rect x="18.2" y="21.2" width="3.3" height="2.1" fill="#6a6a48"/><rect x="25.4" y="52.4" width="2.9" height="3.3" fill="#4c6c3c"/><rect x="24.7" y="41.0" width="1.5" height="2.0" fill="#7a8a5a"/><rect x="36.9" y="53.6" width="1.8" height="2.8" fill="#7a8a5a"/><rect x="27.1" y="41.0" width="2.0" height="1.7" fill="#6a6a48"/><rect x="15.6" y="44.4" width="3.0" height="3.8" fill="#6c7c4c"/><rect x="18.5" y="18.8" width="2.0" height="3.6" fill="#2c2c22"/><rect x="37.2" y="14.8" width="1.7" height="3.9" fill="#6c7c4c"/><rect x="16.9" y="14.9" width="2.5" height="2.6" fill="#7a8a5a"/><rect x="25.3" y="37.3" width="1.5" height="3.3" fill="#4c6c3c"/><rect x="19.4" y="30.8" width="3.3" height="2.5" fill="#4c6c3c"/><rect x="29.5" y="14.8" width="3.5" height="2.3" fill="#6a6a48"/><rect x="34.2" y="41.9" width="3.7" height="3.1" fill="#6c7c4c"/><rect x="28.7" y="19.1" width="3.0" height="2.4" fill="#2c2c22"/><rect x="21.7" y="15.8" width="3.4" height="1.9" fill="#5a4a3a"/><rect x="18.2" y="25.2" width="2.8" height="2.4" fill="#5a4a3a"/><rect x="33.4" y="28.6" width="3.3" height="1.7" fill="#7a8a5a"/><rect x="22.2" y="15.1" width="3.7" height="4.0" fill="#3c4a2c"/><rect x="20.6" y="52.5" width="3.2" height="2.3" fill="#6c7c4c"/><rect x="28.7" y="34.3" width="2.5" height="4.0" fill="#4c6c3c"/><rect x="31.8" y="44.4" width="4.0" height="1.6" fill="#2c2c22"/><rect x="17.6" y="21.1" width="2.6" height="2.8" fill="#4c6c3c"/><rect x="30.6" y="11.1" width="2.1" height="2.2" fill="#7a8a5a"/><rect x="28.2" y="33.1" width="3.9" height="2.9" fill="#6a6a48"/><rect x="30.3" y="46.5" width="1.7" height="3.0" fill="#6a6a48"/><rect x="24.3" y="52.3" width="2.5" height="3.9" fill="#6c7c4c"/><rect x="28.0" y="37.1" width="2.6" height="2.7" fill="#2c2c22"/><rect x="27.6" y="37.1" width="2.4" height="2.2" fill="#2c2c22"/><rect x="28.5" y="23.2" width="3.3" height="2.2" fill="#3c4a2c"/><rect x="33.5" y="36.6" width="3.1" height="2.5" fill="#5a4a3a"/><rect x="16.3" y="24.6" width="2.5" height="3.0" fill="#7a8a5a"/><rect x="16.8" y="50.8" width="2.6" height="2.7" fill="#4c6c3c"/><rect x="16.1" y="15.0" width="3.5" height="3.8" fill="#8a3a30"/><rect x="38.5" y="46.9" width="3.0" height="1.8" fill="#2c2c22"/><rect x="25.0" y="15.8" width="3.7" height="2.4" fill="#8a3a30"/><rect x="18.0" y="30.3" width="3.2" height="2.6" fill="#2c2c22"/><rect x="30.4" y="40.9" width="2.4" height="3.4" fill="#4c6c3c"/><rect x="37.9" y="43.2" width="2.1" height="1.8" fill="#7a8a5a"/><rect x="33.8" y="38.3" width="2.4" height="2.2" fill="#2c2c22"/><rect x="31.8" y="19.0" width="2.2" height="2.1" fill="#4c6c3c"/><rect x="27.1" y="39.6" width="2.0" height="3.2" fill="#6a6a48"/><rect x="15.2" y="22.1" width="1.6" height="1.6" fill="#4c6c3c"/><rect x="28.0" y="13.8" width="1.7" height="3.2" fill="#4c6c3c"/><rect x="30.1" y="27.2" width="2.7" height="2.0" fill="#7a8a5a"/><rect x="26.9" y="16.5" width="3.7" height="3.5" fill="#6c7c4c"/><rect x="34.4" y="38.3" width="3.4" height="2.0" fill="#6c7c4c"/><rect x="32.9" y="27.9" width="1.9" height="1.9" fill="#7a8a5a"/><rect x="22.0" y="44.3" width="3.6" height="2.0" fill="#7a8a5a"/><rect x="28.9" y="31.1" width="2.3" height="2.9" fill="#5a4a3a"/><rect x="28.5" y="32.1" width="3.2" height="2.2" fill="#3c4a2c"/><rect x="16.8" y="20.1" width="3.2" height="1.7" fill="#2c2c22"/><rect x="26.9" y="44.5" width="2.3" height="3.7" fill="#4c6c3c"/><rect x="23.6" y="42.8" width="2.4" height="1.8" fill="#6c7c4c"/><rect x="28.7" y="51.4" width="3.8" height="3.8" fill="#6c7c4c"/><rect x="27.7" y="54.7" width="2.6" height="2.1" fill="#2c2c22"/><rect x="21.0" y="26.7" width="2.4" height="2.4" fill="#5a4a3a"/></g><circle cx="28.5" cy="28" r="14.3" stroke="#5b97d9" stroke-width="3.9" fill="none"/><path d="M25 21L35 28L25 35Z" fill="#5b97d9"/></svg>
<div class="t" style="left:67.2px;top:148.67px;font-size:11.7px;color:#f6f6f6;letter-spacing:0px;">Balcón en San Luis - Luis 2.mp3 sonido hi...</div>
<div class="t" style="right:683.10px;top:149.07px;font-size:11.4px;color:#f6f6f6;background:#5b97d9;padding-left:1px;letter-spacing:-0.1px">16.87s</div>
<svg class="abs" style="left:67px;top:160.67px" width="267" height="30"><g transform="translate(0,15)"><path d="M0 0 L0.0 -1.13 L1.2 -1.31 L2.4 -1.62 L3.6 -1.68 L4.8 -1.44 L6.1 -1.69 L7.3 -1.78 L8.5 -1.69 L9.7 -1.60 L10.9 -1.93 L12.1 -1.91 L13.3 -2.64 L14.5 -3.11 L15.7 -3.50 L17.0 -4.73 L18.2 -4.89 L19.4 -5.38 L20.6 -4.34 L21.8 -4.80 L23.0 -3.81 L24.2 -4.05 L25.4 -3.01 L26.7 -3.13 L27.9 -3.10 L29.1 -3.22 L30.3 -2.95 L31.5 -3.25 L32.7 -3.03 L33.9 -2.50 L35.1 -2.73 L36.3 -2.53 L37.6 -2.62 L38.8 -2.24 L40.0 -2.08 L41.2 -1.83 L42.4 -1.67 L43.6 -1.40 L44.8 -1.75 L46.0 -1.71 L47.2 -2.16 L48.5 -2.90 L49.7 -3.36 L50.9 -4.19 L52.1 -3.97 L53.3 -3.81 L54.5 -3.48 L55.7 -4.09 L56.9 -3.85 L58.1 -3.04 L59.4 -2.24 L60.6 -1.61 L61.8 -1.58 L63.0 -1.59 L64.2 -1.52 L65.4 -1.58 L66.6 -1.67 L67.8 -1.51 L69.0 -1.77 L70.3 -2.62 L71.5 -3.20 L72.7 -3.23 L73.9 -2.88 L75.1 -2.41 L76.3 -2.73 L77.5 -2.74 L78.7 -2.32 L80.0 -2.18 L81.2 -1.96 L82.4 -2.30 L83.6 -2.35 L84.8 -2.21 L86.0 -2.24 L87.2 -2.46 L88.4 -2.36 L89.6 -2.70 L90.9 -2.13 L92.1 -2.25 L93.3 -2.15 L94.5 -2.17 L95.7 -1.93 L96.9 -1.91 L98.1 -1.60 L99.3 -1.57 L100.5 -1.65 L101.8 -1.67 L103.0 -2.40 L104.2 -2.47 L105.4 -2.50 L106.6 -2.50 L107.8 -2.12 L109.0 -2.27 L110.2 -2.53 L111.4 -2.09 L112.7 -2.06 L113.9 -1.88 L115.1 -1.66 L116.3 -1.48 L117.5 -1.51 L118.7 -1.36 L119.9 -1.38 L121.1 -1.40 L122.3 -1.70 L123.6 -1.50 L124.8 -1.79 L126.0 -1.62 L127.2 -1.70 L128.4 -1.86 L129.6 -1.92 L130.8 -1.75 L132.0 -1.54 L133.2 -1.36 L134.5 -1.69 L135.7 -1.78 L136.9 -1.88 L138.1 -1.73 L139.3 -2.14 L140.5 -2.94 L141.7 -3.35 L142.9 -3.29 L144.2 -4.18 L145.4 -4.12 L146.6 -2.96 L147.8 -2.28 L149.0 -1.86 L150.2 -1.48 L151.4 -1.72 L152.6 -1.87 L153.8 -1.62 L155.1 -1.78 L156.3 -1.77 L157.5 -1.49 L158.7 -1.32 L159.9 -1.70 L161.1 -1.46 L162.3 -1.40 L163.5 -1.30 L164.7 -1.39 L166.0 -1.71 L167.2 -1.61 L168.4 -1.76 L169.6 -1.97 L170.8 -2.91 L172.0 -3.40 L173.2 -3.06 L174.4 -4.10 L175.6 -3.63 L176.9 -3.55 L178.1 -3.48 L179.3 -2.95 L180.5 -2.08 L181.7 -1.61 L182.9 -1.35 L184.1 -1.71 L185.3 -1.73 L186.5 -1.89 L187.8 -1.65 L189.0 -1.53 L190.2 -1.76 L191.4 -1.61 L192.6 -1.70 L193.8 -1.65 L195.0 -1.81 L196.2 -2.29 L197.5 -2.92 L198.7 -3.42 L199.9 -3.33 L201.1 -2.39 L202.3 -2.00 L203.5 -1.97 L204.7 -1.91 L205.9 -1.90 L207.1 -1.55 L208.4 -1.78 L209.6 -1.89 L210.8 -1.95 L212.0 -1.68 L213.2 -1.79 L214.4 -1.87 L215.6 -1.83 L216.8 -1.68 L218.0 -1.75 L219.3 -1.55 L220.5 -1.81 L221.7 -1.79 L222.9 -2.10 L224.1 -2.30 L225.3 -2.37 L226.5 -2.92 L227.7 -2.84 L228.9 -2.75 L230.2 -2.68 L231.4 -3.02 L232.6 -2.91 L233.8 -2.13 L235.0 -1.93 L236.2 -1.76 L237.4 -1.73 L238.6 -1.53 L239.8 -1.55 L241.1 -1.53 L242.3 -1.77 L243.5 -1.57 L244.7 -1.36 L245.9 -1.49 L247.1 -1.38 L248.3 -1.71 L249.5 -1.89 L250.8 -2.04 L252.0 -2.59 L253.2 -3.38 L254.4 -3.60 L255.6 -2.83 L256.8 -2.36 L258.0 -2.01 L259.2 -1.90 L260.4 -1.63 L261.7 -1.44 L262.9 -1.28 L264.1 -1.60 L265.3 -1.19 L266.5 -1.42 L266.5 1.47 L265.3 1.25 L264.1 1.63 L262.9 1.32 L261.7 1.42 L260.4 1.74 L259.2 2.03 L258.0 1.98 L256.8 2.47 L255.6 2.80 L254.4 3.42 L253.2 3.29 L252.0 2.44 L250.8 2.16 L249.5 2.02 L248.3 1.61 L247.1 1.40 L245.9 1.47 L244.7 1.28 L243.5 1.52 L242.3 1.70 L241.1 1.59 L239.8 1.44 L238.6 1.46 L237.4 1.72 L236.2 1.63 L235.0 1.96 L233.8 2.16 L232.6 3.06 L231.4 2.89 L230.2 2.59 L228.9 2.77 L227.7 2.74 L226.5 2.96 L225.3 2.28 L224.1 2.36 L222.9 2.20 L221.7 1.87 L220.5 1.94 L219.3 1.56 L218.0 1.75 L216.8 1.77 L215.6 1.90 L214.4 1.89 L213.2 1.76 L212.0 1.63 L210.8 1.84 L209.6 1.98 L208.4 1.68 L207.1 1.61 L205.9 1.91 L204.7 2.04 L203.5 2.04 L202.3 2.14 L201.1 2.26 L199.9 3.33 L198.7 3.45 L197.5 2.84 L196.2 2.29 L195.0 1.77 L193.8 1.66 L192.6 1.57 L191.4 1.60 L190.2 1.75 L189.0 1.49 L187.8 1.62 L186.5 1.97 L185.3 1.78 L184.1 1.71 L182.9 1.38 L181.7 1.58 L180.5 1.98 L179.3 2.73 L178.1 3.36 L176.9 3.60 L175.6 3.84 L174.4 4.30 L173.2 3.07 L172.0 3.65 L170.8 2.89 L169.6 2.07 L168.4 1.74 L167.2 1.67 L166.0 1.83 L164.7 1.35 L163.5 1.24 L162.3 1.43 L161.1 1.47 L159.9 1.67 L158.7 1.22 L157.5 1.47 L156.3 1.75 L155.1 1.75 L153.8 1.71 L152.6 1.89 L151.4 1.78 L150.2 1.57 L149.0 1.93 L147.8 2.28 L146.6 3.07 L145.4 4.20 L144.2 4.27 L142.9 3.35 L141.7 3.31 L140.5 3.00 L139.3 2.18 L138.1 1.85 L136.9 1.96 L135.7 1.87 L134.5 1.76 L133.2 1.43 L132.0 1.57 L130.8 1.71 L129.6 1.86 L128.4 1.92 L127.2 1.79 L126.0 1.63 L124.8 1.70 L123.6 1.58 L122.3 1.70 L121.1 1.39 L119.9 1.28 L118.7 1.36 L117.5 1.56 L116.3 1.46 L115.1 1.62 L113.9 1.92 L112.7 1.91 L111.4 2.10 L110.2 2.70 L109.0 2.34 L107.8 2.09 L106.6 2.57 L105.4 2.54 L104.2 2.36 L103.0 2.30 L101.8 1.77 L100.5 1.59 L99.3 1.47 L98.1 1.68 L96.9 1.91 L95.7 1.90 L94.5 2.18 L93.3 2.23 L92.1 2.14 L90.9 2.18 L89.6 2.79 L88.4 2.47 L87.2 2.37 L86.0 2.27 L84.8 2.12 L83.6 2.37 L82.4 2.19 L81.2 2.05 L80.0 2.30 L78.7 2.26 L77.5 2.62 L76.3 2.92 L75.1 2.48 L73.9 3.03 L72.7 3.00 L71.5 3.40 L70.3 2.67 L69.0 1.72 L67.8 1.49 L66.6 1.73 L65.4 1.65 L64.2 1.45 L63.0 1.62 L61.8 1.50 L60.6 1.72 L59.4 2.22 L58.1 3.23 L56.9 3.98 L55.7 4.15 L54.5 3.35 L53.3 3.83 L52.1 3.76 L50.9 3.96 L49.7 3.47 L48.5 2.84 L47.2 2.24 L46.0 1.64 L44.8 1.80 L43.6 1.45 L42.4 1.62 L41.2 1.72 L40.0 2.05 L38.8 2.23 L37.6 2.46 L36.3 2.41 L35.1 2.55 L33.9 2.54 L32.7 3.21 L31.5 3.11 L30.3 2.74 L29.1 3.32 L27.9 3.25 L26.7 3.35 L25.4 3.06 L24.2 3.96 L23.0 4.01 L21.8 4.53 L20.6 4.47 L19.4 5.05 L18.2 4.82 L17.0 4.73 L15.7 3.44 L14.5 2.95 L13.3 2.53 L12.1 2.00 L10.9 1.92 L9.7 1.62 L8.5 1.62 L7.3 1.84 L6.1 1.65 L4.8 1.46 L3.6 1.79 L2.4 1.74 L1.2 1.22 L0.0 1.18 Z" fill="#efefef"/></g></svg>
<div class="abs" style="left:0;top:210.39px;width:340px;height:65.12px;background:#5b97d9"></div>
<svg class="abs" style="left:4px;top:214.39px" width="57" height="57" viewBox="0 0 57 57" preserveAspectRatio="none"><defs><filter id="bl01"><feGaussianBlur stdDeviation="0.7"/></filter></defs><g filter="url(#bl01)"><rect width="57" height="57" fill="#f8f8f6"/><path d="M0 25L10 22M2 40L12 44M48 30L57 40" stroke="#c8c0c0" stroke-width="0.6"/><rect x="50" y="4" width="1" height="50" fill="#d8d8d8"/><rect x="8.7" y="9" width="38" height="48" fill="#d9c08e"/><rect x="13" y="5.8" width="30" height="5" fill="#e2cc98"/><rect x="21" y="2.8" width="13" height="4" fill="#e8d6a6"/><rect x="15" y="10.6" width="26.5" height="47" fill="#55523a"/><rect x="25.9" y="35.5" width="3.8" height="2.7" fill="#4c6c3c"/><rect x="19.4" y="33.3" width="3.1" height="3.5" fill="#6a6a48"/><rect x="25.7" y="16.9" width="2.8" height="3.7" fill="#3c4a2c"/><rect x="29.3" y="28.2" width="2.6" height="3.3" fill="#8a3a30"/><rect x="30.0" y="47.5" width="1.7" height="1.6" fill="#4c6c3c"/><rect x="29.4" y="45.1" width="2.3" height="3.0" fill="#4c6c3c"/><rect x="27.5" y="39.0" width="2.7" height="3.2" fill="#6c7c4c"/><rect x="30.7" y="28.7" width="2.9" height="3.8" fill="#6a6a48"/><rect x="32.0" y="24.6" width="2.1" height="2.2" fill="#6a6a48"/><rect x="28.5" y="15.4" width="1.8" height="2.2" fill="#6a6a48"/><rect x="38.0" y="48.2" width="1.5" height="2.0" fill="#6a6a48"/><rect x="26.3" y="54.1" width="2.5" height="1.7" fill="#4c6c3c"/><rect x="33.7" y="22.6" width="1.7" height="2.3" fill="#5a4a3a"/><rect x="33.2" y="15.8" width="2.1" height="1.8" fill="#3c4a2c"/><rect x="26.2" y="32.2" width="3.2" height="2.0" fill="#4c6c3c"/><rect x="38.6" y="44.8" width="2.5" height="2.5" fill="#6c7c4c"/><rect x="25.1" y="20.1" width="2.2" height="3.9" fill="#2c2c22"/><rect x="38.9" y="11.5" width="2.0" height="4.0" fill="#6a6a48"/><rect x="16.0" y="17.1" width="2.6" height="1.5" fill="#7a8a5a"/><rect x="34.9" y="27.7" width="1.7" height="2.0" fill="#4c6c3c"/><rect x="15.4" y="27.0" width="3.1" height="1.8" fill="#6c7c4c"/><rect x="35.0" y="16.6" width="2.5" height="3.1" fill="#2c2c22"/><rect x="36.8" y="46.9" width="2.1" height="2.0" fill="#2c2c22"/><rect x="19.7" y="52.8" width="3.7" height="3.0" fill="#6c7c4c"/><rect x="16.1" y="15.4" width="2.8" height="2.1" fill="#5a4a3a"/><rect x="21.2" y="47.2" width="3.0" height="2.2" fill="#4c6c3c"/><rect x="37.3" y="54.0" width="1.8" height="2.7" fill="#2c2c22"/><rect x="29.7" y="23.0" width="3.8" height="2.0" fill="#3c4a2c"/><rect x="16.7" y="28.9" width="2.1" height="1.6" fill="#2c2c22"/><rect x="23.9" y="36.0" width="1.8" height="2.4" fill="#6c7c4c"/><rect x="38.5" y="39.8" width="3.2" height="3.0" fill="#4c6c3c"/><rect x="29.2" y="51.6" width="2.7" height="2.4" fill="#7a8a5a"/><rect x="38.1" y="11.5" width="3.1" height="2.7" fill="#2c2c22"/><rect x="22.7" y="55.0" width="1.7" height="2.9" fill="#6a6a48"/><rect x="36.6" y="43.3" width="3.3" height="3.5" fill="#7a8a5a"/><rect x="23.4" y="41.0" width="3.8" height="3.7" fill="#6c7c4c"/><rect x="37.7" y="11.9" width="2.7" height="1.5" fill="#5a4a3a"/><rect x="24.1" y="11.2" width="1.7" height="1.7" fill="#6a6a48"/><rect x="38.8" y="49.7" width="3.3" height="2.5" fill="#2c2c22"/><rect x="26.0" y="31.1" width="2.9" height="2.8" fill="#3c4a2c"/><rect x="22.4" y="14.5" width="1.6" height="3.9" fill="#6a6a48"/><rect x="26.9" y="37.9" width="3.8" height="2.1" fill="#3c4a2c"/><rect x="23.8" y="17.0" width="3.0" height="2.8" fill="#7a8a5a"/><rect x="30.8" y="30.2" width="3.7" height="2.3" fill="#2c2c22"/><rect x="19.8" y="29.7" width="3.5" height="3.8" fill="#4c6c3c"/><rect x="24.2" y="36.5" width="2.3" height="1.8" fill="#6c7c4c"/><rect x="23.4" y="50.4" width="1.6" height="1.7" fill="#7a8a5a"/><rect x="34.7" y="15.6" width="2.7" height="3.8" fill="#5a4a3a"/><rect x="24.2" y="33.7" width="3.2" height="3.3" fill="#6c7c4c"/><rect x="22.7" y="47.4" width="2.2" height="3.0" fill="#7a8a5a"/><rect x="28.7" y="24.3" width="3.5" height="1.5" fill="#8a3a30"/><rect x="24.7" y="19.0" width="3.4" height="2.2" fill="#8a3a30"/><rect x="34.1" y="54.3" width="1.8" height="1.8" fill="#2c2c22"/><rect x="30.7" y="46.4" width="3.9" height="3.2" fill="#4c6c3c"/><rect x="34.8" y="22.0" width="3.3" height="3.4" fill="#3c4a2c"/><rect x="19.3" y="22.7" width="2.4" height="3.2" fill="#8a3a30"/><rect x="24.4" y="45.8" width="3.8" height="1.7" fill="#6c7c4c"/><rect x="18.1" y="30.7" width="3.1" height="3.8" fill="#5a4a3a"/><rect x="28.2" y="39.6" width="2.8" height="3.5" fill="#7a8a5a"/><rect x="26.1" y="39.5" width="2.0" height="3.3" fill="#6a6a48"/><rect x="20.1" y="50.6" width="4.0" height="3.9" fill="#2c2c22"/><rect x="38.4" y="52.0" width="2.2" height="3.3" fill="#6a6a48"/><rect x="23.4" y="14.3" width="2.6" height="2.9" fill="#2c2c22"/><rect x="26.7" y="11.9" width="3.5" height="1.7" fill="#3c4a2c"/><rect x="19.1" y="25.5" width="3.5" height="1.9" fill="#8a3a30"/><rect x="39.0" y="50.6" width="2.8" height="3.2" fill="#6c7c4c"/><rect x="37.7" y="32.5" width="3.9" height="1.7" fill="#4c6c3c"/><rect x="25.5" y="35.4" width="3.6" height="2.9" fill="#8a3a30"/><rect x="27.5" y="48.1" width="2.9" height="2.3" fill="#6c7c4c"/><rect x="37.9" y="49.2" width="3.0" height="2.3" fill="#4c6c3c"/><rect x="38.2" y="33.9" width="2.9" height="2.0" fill="#6a6a48"/><rect x="27.1" y="37.5" width="1.6" height="3.9" fill="#5a4a3a"/><rect x="28.1" y="54.5" width="1.8" height="1.7" fill="#4c6c3c"/><rect x="16.6" y="34.5" width="2.5" height="3.9" fill="#5a4a3a"/><rect x="21.5" y="31.6" width="1.8" height="2.6" fill="#6c7c4c"/><rect x="27.6" y="15.4" width="2.5" height="1.6" fill="#2c2c22"/><rect x="18.1" y="45.2" width="1.6" height="2.0" fill="#4c6c3c"/><rect x="15.3" y="23.2" width="3.3" height="2.1" fill="#6c7c4c"/><rect x="17.5" y="43.1" width="1.8" height="2.8" fill="#7a8a5a"/><rect x="32.2" y="41.7" width="3.7" height="1.6" fill="#6c7c4c"/><rect x="34.8" y="37.9" width="2.8" height="3.7" fill="#4c6c3c"/><rect x="27.7" y="48.4" width="3.0" height="3.6" fill="#4c6c3c"/><rect x="37.0" y="38.5" width="2.4" height="2.0" fill="#2c2c22"/><rect x="22.6" y="51.6" width="2.0" height="4.0" fill="#6a6a48"/><rect x="18.2" y="21.2" width="3.3" height="2.1" fill="#6a6a48"/><rect x="25.4" y="52.4" width="2.9" height="3.3" fill="#4c6c3c"/><rect x="24.7" y="41.0" width="1.5" height="2.0" fill="#7a8a5a"/><rect x="36.9" y="53.6" width="1.8" height="2.8" fill="#7a8a5a"/><rect x="27.1" y="41.0" width="2.0" height="1.7" fill="#6a6a48"/><rect x="15.6" y="44.4" width="3.0" height="3.8" fill="#6c7c4c"/><rect x="18.5" y="18.8" width="2.0" height="3.6" fill="#2c2c22"/><rect x="37.2" y="14.8" width="1.7" height="3.9" fill="#6c7c4c"/><rect x="16.9" y="14.9" width="2.5" height="2.6" fill="#7a8a5a"/><rect x="25.3" y="37.3" width="1.5" height="3.3" fill="#4c6c3c"/><rect x="19.4" y="30.8" width="3.3" height="2.5" fill="#4c6c3c"/><rect x="29.5" y="14.8" width="3.5" height="2.3" fill="#6a6a48"/><rect x="34.2" y="41.9" width="3.7" height="3.1" fill="#6c7c4c"/><rect x="28.7" y="19.1" width="3.0" height="2.4" fill="#2c2c22"/><rect x="21.7" y="15.8" width="3.4" height="1.9" fill="#5a4a3a"/><rect x="18.2" y="25.2" width="2.8" height="2.4" fill="#5a4a3a"/><rect x="33.4" y="28.6" width="3.3" height="1.7" fill="#7a8a5a"/><rect x="22.2" y="15.1" width="3.7" height="4.0" fill="#3c4a2c"/><rect x="20.6" y="52.5" width="3.2" height="2.3" fill="#6c7c4c"/><rect x="28.7" y="34.3" width="2.5" height="4.0" fill="#4c6c3c"/><rect x="31.8" y="44.4" width="4.0" height="1.6" fill="#2c2c22"/><rect x="17.6" y="21.1" width="2.6" height="2.8" fill="#4c6c3c"/><rect x="30.6" y="11.1" width="2.1" height="2.2" fill="#7a8a5a"/><rect x="28.2" y="33.1" width="3.9" height="2.9" fill="#6a6a48"/><rect x="30.3" y="46.5" width="1.7" height="3.0" fill="#6a6a48"/><rect x="24.3" y="52.3" width="2.5" height="3.9" fill="#6c7c4c"/><rect x="28.0" y="37.1" width="2.6" height="2.7" fill="#2c2c22"/><rect x="27.6" y="37.1" width="2.4" height="2.2" fill="#2c2c22"/><rect x="28.5" y="23.2" width="3.3" height="2.2" fill="#3c4a2c"/><rect x="33.5" y="36.6" width="3.1" height="2.5" fill="#5a4a3a"/><rect x="16.3" y="24.6" width="2.5" height="3.0" fill="#7a8a5a"/><rect x="16.8" y="50.8" width="2.6" height="2.7" fill="#4c6c3c"/><rect x="16.1" y="15.0" width="3.5" height="3.8" fill="#8a3a30"/><rect x="38.5" y="46.9" width="3.0" height="1.8" fill="#2c2c22"/><rect x="25.0" y="15.8" width="3.7" height="2.4" fill="#8a3a30"/><rect x="18.0" y="30.3" width="3.2" height="2.6" fill="#2c2c22"/><rect x="30.4" y="40.9" width="2.4" height="3.4" fill="#4c6c3c"/><rect x="37.9" y="43.2" width="2.1" height="1.8" fill="#7a8a5a"/><rect x="33.8" y="38.3" width="2.4" height="2.2" fill="#2c2c22"/><rect x="31.8" y="19.0" width="2.2" height="2.1" fill="#4c6c3c"/><rect x="27.1" y="39.6" width="2.0" height="3.2" fill="#6a6a48"/><rect x="15.2" y="22.1" width="1.6" height="1.6" fill="#4c6c3c"/><rect x="28.0" y="13.8" width="1.7" height="3.2" fill="#4c6c3c"/><rect x="30.1" y="27.2" width="2.7" height="2.0" fill="#7a8a5a"/><rect x="26.9" y="16.5" width="3.7" height="3.5" fill="#6c7c4c"/><rect x="34.4" y="38.3" width="3.4" height="2.0" fill="#6c7c4c"/><rect x="32.9" y="27.9" width="1.9" height="1.9" fill="#7a8a5a"/><rect x="22.0" y="44.3" width="3.6" height="2.0" fill="#7a8a5a"/><rect x="28.9" y="31.1" width="2.3" height="2.9" fill="#5a4a3a"/><rect x="28.5" y="32.1" width="3.2" height="2.2" fill="#3c4a2c"/><rect x="16.8" y="20.1" width="3.2" height="1.7" fill="#2c2c22"/><rect x="26.9" y="44.5" width="2.3" height="3.7" fill="#4c6c3c"/><rect x="23.6" y="42.8" width="2.4" height="1.8" fill="#6c7c4c"/><rect x="28.7" y="51.4" width="3.8" height="3.8" fill="#6c7c4c"/><rect x="27.7" y="54.7" width="2.6" height="2.1" fill="#2c2c22"/><rect x="21.0" y="26.7" width="2.4" height="2.4" fill="#5a4a3a"/></g><circle cx="28.5" cy="28" r="14.3" stroke="#5b97d9" stroke-width="3.9" fill="none"/><path d="M25 21L35 28L25 35Z" fill="#5b97d9"/></svg>
<div class="t" style="left:67.2px;top:213.39px;font-size:11.7px;color:#f6f6f6;letter-spacing:0px;">Balcón en San Luis - Luis 2.mp3 sonido hie...</div>
<div class="t" style="right:682.70px;top:213.79px;font-size:11.4px;color:#f6f6f6;background:#5b97d9;padding-left:1px;letter-spacing:0.3px">9.36s</div>
<svg class="abs" style="left:67px;top:225.39px" width="267" height="30"><g transform="translate(0,15)"><path d="M0 0 L0.0 -1.34 L1.2 -1.02 L2.4 -1.54 L3.6 -1.57 L4.8 -1.55 L6.1 -1.56 L7.3 -2.07 L8.5 -6.02 L9.7 -8.23 L10.9 -4.34 L12.1 -1.56 L13.3 -1.30 L14.5 -1.27 L15.7 -1.35 L17.0 -1.23 L18.2 -1.26 L19.4 -1.57 L20.6 -1.94 L21.8 -2.89 L23.0 -4.06 L24.2 -5.31 L25.4 -6.81 L26.7 -6.51 L27.9 -8.32 L29.1 -8.56 L30.3 -10.22 L31.5 -10.52 L32.7 -10.72 L33.9 -9.54 L35.1 -10.72 L36.3 -9.55 L37.6 -8.28 L38.8 -7.45 L40.0 -7.56 L41.2 -7.53 L42.4 -8.52 L43.6 -7.67 L44.8 -7.48 L46.0 -6.18 L47.2 -8.00 L48.5 -6.50 L49.7 -8.42 L50.9 -7.66 L52.1 -7.04 L53.3 -7.62 L54.5 -9.77 L55.7 -9.01 L56.9 -8.16 L58.1 -9.92 L59.4 -9.91 L60.6 -8.32 L61.8 -8.87 L63.0 -9.65 L64.2 -8.60 L65.4 -6.30 L66.6 -5.34 L67.8 -5.29 L69.0 -3.54 L70.3 -3.15 L71.5 -2.29 L72.7 -2.12 L73.9 -1.48 L75.1 -1.22 L76.3 -1.87 L77.5 -2.87 L78.7 -3.80 L80.0 -3.63 L81.2 -3.75 L82.4 -3.59 L83.6 -3.54 L84.8 -3.65 L86.0 -3.08 L87.2 -2.84 L88.4 -2.20 L89.6 -1.40 L90.9 -1.12 L92.1 -0.98 L93.3 -1.15 L94.5 -2.74 L95.7 -6.87 L96.9 -8.57 L98.1 -7.57 L99.3 -4.59 L100.5 -2.13 L101.8 -1.50 L103.0 -1.12 L104.2 -1.23 L105.4 -1.53 L106.6 -1.42 L107.8 -1.67 L109.0 -2.46 L110.2 -3.43 L111.4 -4.87 L112.7 -6.32 L113.9 -6.65 L115.1 -5.94 L116.3 -7.16 L117.5 -6.18 L118.7 -7.10 L119.9 -9.04 L121.1 -7.65 L122.3 -7.72 L123.6 -8.18 L124.8 -6.99 L126.0 -7.97 L127.2 -6.82 L128.4 -6.25 L129.6 -5.55 L130.8 -3.98 L132.0 -3.85 L133.2 -2.71 L134.5 -1.87 L135.7 -1.52 L136.9 -1.56 L138.1 -1.22 L139.3 -1.05 L140.5 -1.31 L141.7 -1.47 L142.9 -1.53 L144.2 -1.64 L145.4 -1.64 L146.6 -2.25 L147.8 -3.15 L149.0 -5.05 L150.2 -6.63 L151.4 -5.81 L152.6 -5.69 L153.8 -6.60 L155.1 -6.92 L156.3 -5.77 L157.5 -7.10 L158.7 -5.45 L159.9 -3.65 L161.1 -4.35 L162.3 -3.67 L163.5 -4.11 L164.7 -5.96 L166.0 -6.38 L167.2 -6.30 L168.4 -7.22 L169.6 -6.38 L170.8 -5.42 L172.0 -4.83 L173.2 -3.41 L174.4 -2.82 L175.6 -2.43 L176.9 -2.61 L178.1 -3.86 L179.3 -3.78 L180.5 -3.73 L181.7 -4.49 L182.9 -4.14 L184.1 -3.83 L185.3 -3.49 L186.5 -2.82 L187.8 -1.77 L189.0 -1.49 L190.2 -2.12 L191.4 -2.74 L192.6 -5.66 L193.8 -8.27 L195.0 -8.60 L196.2 -5.97 L197.5 -3.90 L198.7 -1.96 L199.9 -1.60 L201.1 -1.62 L202.3 -1.35 L203.5 -1.38 L204.7 -2.03 L205.9 -3.57 L207.1 -6.55 L208.4 -6.37 L209.6 -10.09 L210.8 -11.53 L212.0 -11.56 L213.2 -9.63 L214.4 -8.05 L215.6 -10.29 L216.8 -10.15 L218.0 -7.90 L219.3 -6.86 L220.5 -4.70 L221.7 -4.89 L222.9 -6.11 L224.1 -7.00 L225.3 -5.67 L226.5 -3.52 L227.7 -2.24 L228.9 -1.46 L230.2 -1.36 L231.4 -1.63 L232.6 -1.83 L233.8 -2.33 L235.0 -3.04 L236.2 -3.54 L237.4 -4.13 L238.6 -4.93 L239.8 -4.96 L241.1 -4.09 L242.3 -3.74 L243.5 -3.97 L244.7 -2.87 L245.9 -1.80 L247.1 -1.31 L248.3 -1.35 L249.5 -1.64 L250.8 -2.82 L252.0 -3.47 L253.2 -3.86 L254.4 -3.42 L255.6 -3.78 L256.8 -3.56 L258.0 -3.52 L259.2 -3.70 L260.4 -3.05 L261.7 -2.13 L262.9 -1.81 L264.1 -1.66 L265.3 -1.33 L266.5 -1.40 L266.5 1.45 L265.3 1.42 L264.1 1.60 L262.9 1.85 L261.7 2.18 L260.4 2.99 L259.2 3.64 L258.0 3.35 L256.8 3.80 L255.6 3.69 L254.4 3.41 L253.2 4.09 L252.0 3.30 L250.8 3.02 L249.5 1.55 L248.3 1.25 L247.1 1.28 L245.9 1.76 L244.7 3.05 L243.5 4.20 L242.3 3.89 L241.1 4.06 L239.8 4.99 L238.6 4.73 L237.4 4.33 L236.2 3.48 L235.0 2.95 L233.8 2.38 L232.6 1.74 L231.4 1.59 L230.2 1.45 L228.9 1.38 L227.7 2.12 L226.5 3.36 L225.3 5.46 L224.1 6.91 L222.9 5.88 L221.7 4.78 L220.5 4.52 L219.3 6.59 L218.0 8.03 L216.8 9.90 L215.6 10.09 L214.4 8.37 L213.2 9.00 L212.0 10.95 L210.8 12.13 L209.6 9.98 L208.4 6.63 L207.1 6.19 L205.9 3.59 L204.7 2.14 L203.5 1.35 L202.3 1.41 L201.1 1.64 L199.9 1.58 L198.7 2.11 L197.5 3.83 L196.2 5.95 L195.0 8.76 L193.8 8.04 L192.6 5.94 L191.4 2.78 L190.2 2.14 L189.0 1.50 L187.8 1.89 L186.5 3.02 L185.3 3.67 L184.1 3.80 L182.9 4.08 L181.7 4.51 L180.5 3.47 L179.3 3.56 L178.1 4.15 L176.9 2.46 L175.6 2.59 L174.4 2.90 L173.2 3.63 L172.0 4.52 L170.8 5.26 L169.6 6.67 L168.4 6.69 L167.2 5.93 L166.0 6.23 L164.7 5.67 L163.5 3.90 L162.3 3.77 L161.1 4.08 L159.9 3.91 L158.7 5.57 L157.5 6.62 L156.3 6.12 L155.1 6.65 L153.8 6.59 L152.6 5.74 L151.4 5.50 L150.2 6.63 L149.0 4.72 L147.8 3.01 L146.6 2.39 L145.4 1.71 L144.2 1.65 L142.9 1.58 L141.7 1.55 L140.5 1.24 L139.3 1.05 L138.1 1.15 L136.9 1.47 L135.7 1.43 L134.5 1.79 L133.2 2.52 L132.0 3.69 L130.8 3.91 L129.6 5.65 L128.4 6.59 L127.2 7.24 L126.0 8.23 L124.8 7.00 L123.6 8.70 L122.3 7.33 L121.1 7.20 L119.9 9.47 L118.7 7.24 L117.5 5.91 L116.3 7.02 L115.1 5.76 L113.9 6.58 L112.7 6.25 L111.4 4.80 L110.2 3.59 L109.0 2.58 L107.8 1.69 L106.6 1.41 L105.4 1.48 L104.2 1.27 L103.0 1.20 L101.8 1.44 L100.5 2.20 L99.3 4.73 L98.1 7.75 L96.9 7.96 L95.7 6.93 L94.5 2.62 L93.3 1.10 L92.1 0.99 L90.9 1.14 L89.6 1.43 L88.4 2.28 L87.2 2.92 L86.0 3.07 L84.8 3.40 L83.6 3.69 L82.4 3.77 L81.2 3.94 L80.0 3.68 L78.7 3.54 L77.5 2.74 L76.3 1.76 L75.1 1.24 L73.9 1.49 L72.7 2.02 L71.5 2.44 L70.3 3.37 L69.0 3.76 L67.8 5.26 L66.6 5.18 L65.4 6.03 L64.2 9.01 L63.0 9.94 L61.8 8.57 L60.6 8.83 L59.4 10.02 L58.1 9.79 L56.9 8.05 L55.7 9.31 L54.5 9.71 L53.3 7.80 L52.1 6.64 L50.9 7.89 L49.7 8.13 L48.5 6.90 L47.2 7.66 L46.0 6.02 L44.8 7.52 L43.6 7.55 L42.4 8.55 L41.2 8.01 L40.0 7.22 L38.8 7.76 L37.6 8.52 L36.3 9.96 L35.1 10.63 L33.9 9.47 L32.7 10.48 L31.5 10.47 L30.3 9.84 L29.1 8.16 L27.9 8.29 L26.7 6.21 L25.4 6.78 L24.2 5.37 L23.0 3.94 L21.8 2.75 L20.6 1.97 L19.4 1.65 L18.2 1.21 L17.0 1.25 L15.7 1.39 L14.5 1.34 L13.3 1.33 L12.1 1.52 L10.9 4.15 L9.7 8.65 L8.5 5.84 L7.3 1.92 L6.1 1.65 L4.8 1.48 L3.6 1.53 L2.4 1.49 L1.2 0.98 L0.0 1.38 Z" fill="#efefef"/></g></svg>
<div class="abs" style="left:0;top:275.11px;width:340px;height:65.12px;background:#5b97d9"></div>
<svg class="abs" style="left:4px;top:279.11px" width="57" height="57" viewBox="0 0 57 57" preserveAspectRatio="none"><defs><filter id="bl02"><feGaussianBlur stdDeviation="0.7"/></filter></defs><g filter="url(#bl02)"><rect width="57" height="57" fill="#f8f8f6"/><path d="M0 25L10 22M2 40L12 44M48 30L57 40" stroke="#c8c0c0" stroke-width="0.6"/><rect x="50" y="4" width="1" height="50" fill="#d8d8d8"/><rect x="8.7" y="9" width="38" height="48" fill="#d9c08e"/><rect x="13" y="5.8" width="30" height="5" fill="#e2cc98"/><rect x="21" y="2.8" width="13" height="4" fill="#e8d6a6"/><rect x="15" y="10.6" width="26.5" height="47" fill="#55523a"/><rect x="25.9" y="35.5" width="3.8" height="2.7" fill="#4c6c3c"/><rect x="19.4" y="33.3" width="3.1" height="3.5" fill="#6a6a48"/><rect x="25.7" y="16.9" width="2.8" height="3.7" fill="#3c4a2c"/><rect x="29.3" y="28.2" width="2.6" height="3.3" fill="#8a3a30"/><rect x="30.0" y="47.5" width="1.7" height="1.6" fill="#4c6c3c"/><rect x="29.4" y="45.1" width="2.3" height="3.0" fill="#4c6c3c"/><rect x="27.5" y="39.0" width="2.7" height="3.2" fill="#6c7c4c"/><rect x="30.7" y="28.7" width="2.9" height="3.8" fill="#6a6a48"/><rect x="32.0" y="24.6" width="2.1" height="2.2" fill="#6a6a48"/><rect x="28.5" y="15.4" width="1.8" height="2.2" fill="#6a6a48"/><rect x="38.0" y="48.2" width="1.5" height="2.0" fill="#6a6a48"/><rect x="26.3" y="54.1" width="2.5" height="1.7" fill="#4c6c3c"/><rect x="33.7" y="22.6" width="1.7" height="2.3" fill="#5a4a3a"/><rect x="33.2" y="15.8" width="2.1" height="1.8" fill="#3c4a2c"/><rect x="26.2" y="32.2" width="3.2" height="2.0" fill="#4c6c3c"/><rect x="38.6" y="44.8" width="2.5" height="2.5" fill="#6c7c4c"/><rect x="25.1" y="20.1" width="2.2" height="3.9" fill="#2c2c22"/><rect x="38.9" y="11.5" width="2.0" height="4.0" fill="#6a6a48"/><rect x="16.0" y="17.1" width="2.6" height="1.5" fill="#7a8a5a"/><rect x="34.9" y="27.7" width="1.7" height="2.0" fill="#4c6c3c"/><rect x="15.4" y="27.0" width="3.1" height="1.8" fill="#6c7c4c"/><rect x="35.0" y="16.6" width="2.5" height="3.1" fill="#2c2c22"/><rect x="36.8" y="46.9" width="2.1" height="2.0" fill="#2c2c22"/><rect x="19.7" y="52.8" width="3.7" height="3.0" fill="#6c7c4c"/><rect x="16.1" y="15.4" width="2.8" height="2.1" fill="#5a4a3a"/><rect x="21.2" y="47.2" width="3.0" height="2.2" fill="#4c6c3c"/><rect x="37.3" y="54.0" width="1.8" height="2.7" fill="#2c2c22"/><rect x="29.7" y="23.0" width="3.8" height="2.0" fill="#3c4a2c"/><rect x="16.7" y="28.9" width="2.1" height="1.6" fill="#2c2c22"/><rect x="23.9" y="36.0" width="1.8" height="2.4" fill="#6c7c4c"/><rect x="38.5" y="39.8" width="3.2" height="3.0" fill="#4c6c3c"/><rect x="29.2" y="51.6" width="2.7" height="2.4" fill="#7a8a5a"/><rect x="38.1" y="11.5" width="3.1" height="2.7" fill="#2c2c22"/><rect x="22.7" y="55.0" width="1.7" height="2.9" fill="#6a6a48"/><rect x="36.6" y="43.3" width="3.3" height="3.5" fill="#7a8a5a"/><rect x="23.4" y="41.0" width="3.8" height="3.7" fill="#6c7c4c"/><rect x="37.7" y="11.9" width="2.7" height="1.5" fill="#5a4a3a"/><rect x="24.1" y="11.2" width="1.7" height="1.7" fill="#6a6a48"/><rect x="38.8" y="49.7" width="3.3" height="2.5" fill="#2c2c22"/><rect x="26.0" y="31.1" width="2.9" height="2.8" fill="#3c4a2c"/><rect x="22.4" y="14.5" width="1.6" height="3.9" fill="#6a6a48"/><rect x="26.9" y="37.9" width="3.8" height="2.1" fill="#3c4a2c"/><rect x="23.8" y="17.0" width="3.0" height="2.8" fill="#7a8a5a"/><rect x="30.8" y="30.2" width="3.7" height="2.3" fill="#2c2c22"/><rect x="19.8" y="29.7" width="3.5" height="3.8" fill="#4c6c3c"/><rect x="24.2" y="36.5" width="2.3" height="1.8" fill="#6c7c4c"/><rect x="23.4" y="50.4" width="1.6" height="1.7" fill="#7a8a5a"/><rect x="34.7" y="15.6" width="2.7" height="3.8" fill="#5a4a3a"/><rect x="24.2" y="33.7" width="3.2" height="3.3" fill="#6c7c4c"/><rect x="22.7" y="47.4" width="2.2" height="3.0" fill="#7a8a5a"/><rect x="28.7" y="24.3" width="3.5" height="1.5" fill="#8a3a30"/><rect x="24.7" y="19.0" width="3.4" height="2.2" fill="#8a3a30"/><rect x="34.1" y="54.3" width="1.8" height="1.8" fill="#2c2c22"/><rect x="30.7" y="46.4" width="3.9" height="3.2" fill="#4c6c3c"/><rect x="34.8" y="22.0" width="3.3" height="3.4" fill="#3c4a2c"/><rect x="19.3" y="22.7" width="2.4" height="3.2" fill="#8a3a30"/><rect x="24.4" y="45.8" width="3.8" height="1.7" fill="#6c7c4c"/><rect x="18.1" y="30.7" width="3.1" height="3.8" fill="#5a4a3a"/><rect x="28.2" y="39.6" width="2.8" height="3.5" fill="#7a8a5a"/><rect x="26.1" y="39.5" width="2.0" height="3.3" fill="#6a6a48"/><rect x="20.1" y="50.6" width="4.0" height="3.9" fill="#2c2c22"/><rect x="38.4" y="52.0" width="2.2" height="3.3" fill="#6a6a48"/><rect x="23.4" y="14.3" width="2.6" height="2.9" fill="#2c2c22"/><rect x="26.7" y="11.9" width="3.5" height="1.7" fill="#3c4a2c"/><rect x="19.1" y="25.5" width="3.5" height="1.9" fill="#8a3a30"/><rect x="39.0" y="50.6" width="2.8" height="3.2" fill="#6c7c4c"/><rect x="37.7" y="32.5" width="3.9" height="1.7" fill="#4c6c3c"/><rect x="25.5" y="35.4" width="3.6" height="2.9" fill="#8a3a30"/><rect x="27.5" y="48.1" width="2.9" height="2.3" fill="#6c7c4c"/><rect x="37.9" y="49.2" width="3.0" height="2.3" fill="#4c6c3c"/><rect x="38.2" y="33.9" width="2.9" height="2.0" fill="#6a6a48"/><rect x="27.1" y="37.5" width="1.6" height="3.9" fill="#5a4a3a"/><rect x="28.1" y="54.5" width="1.8" height="1.7" fill="#4c6c3c"/><rect x="16.6" y="34.5" width="2.5" height="3.9" fill="#5a4a3a"/><rect x="21.5" y="31.6" width="1.8" height="2.6" fill="#6c7c4c"/><rect x="27.6" y="15.4" width="2.5" height="1.6" fill="#2c2c22"/><rect x="18.1" y="45.2" width="1.6" height="2.0" fill="#4c6c3c"/><rect x="15.3" y="23.2" width="3.3" height="2.1" fill="#6c7c4c"/><rect x="17.5" y="43.1" width="1.8" height="2.8" fill="#7a8a5a"/><rect x="32.2" y="41.7" width="3.7" height="1.6" fill="#6c7c4c"/><rect x="34.8" y="37.9" width="2.8" height="3.7" fill="#4c6c3c"/><rect x="27.7" y="48.4" width="3.0" height="3.6" fill="#4c6c3c"/><rect x="37.0" y="38.5" width="2.4" height="2.0" fill="#2c2c22"/><rect x="22.6" y="51.6" width="2.0" height="4.0" fill="#6a6a48"/><rect x="18.2" y="21.2" width="3.3" height="2.1" fill="#6a6a48"/><rect x="25.4" y="52.4" width="2.9" height="3.3" fill="#4c6c3c"/><rect x="24.7" y="41.0" width="1.5" height="2.0" fill="#7a8a5a"/><rect x="36.9" y="53.6" width="1.8" height="2.8" fill="#7a8a5a"/><rect x="27.1" y="41.0" width="2.0" height="1.7" fill="#6a6a48"/><rect x="15.6" y="44.4" width="3.0" height="3.8" fill="#6c7c4c"/><rect x="18.5" y="18.8" width="2.0" height="3.6" fill="#2c2c22"/><rect x="37.2" y="14.8" width="1.7" height="3.9" fill="#6c7c4c"/><rect x="16.9" y="14.9" width="2.5" height="2.6" fill="#7a8a5a"/><rect x="25.3" y="37.3" width="1.5" height="3.3" fill="#4c6c3c"/><rect x="19.4" y="30.8" width="3.3" height="2.5" fill="#4c6c3c"/><rect x="29.5" y="14.8" width="3.5" height="2.3" fill="#6a6a48"/><rect x="34.2" y="41.9" width="3.7" height="3.1" fill="#6c7c4c"/><rect x="28.7" y="19.1" width="3.0" height="2.4" fill="#2c2c22"/><rect x="21.7" y="15.8" width="3.4" height="1.9" fill="#5a4a3a"/><rect x="18.2" y="25.2" width="2.8" height="2.4" fill="#5a4a3a"/><rect x="33.4" y="28.6" width="3.3" height="1.7" fill="#7a8a5a"/><rect x="22.2" y="15.1" width="3.7" height="4.0" fill="#3c4a2c"/><rect x="20.6" y="52.5" width="3.2" height="2.3" fill="#6c7c4c"/><rect x="28.7" y="34.3" width="2.5" height="4.0" fill="#4c6c3c"/><rect x="31.8" y="44.4" width="4.0" height="1.6" fill="#2c2c22"/><rect x="17.6" y="21.1" width="2.6" height="2.8" fill="#4c6c3c"/><rect x="30.6" y="11.1" width="2.1" height="2.2" fill="#7a8a5a"/><rect x="28.2" y="33.1" width="3.9" height="2.9" fill="#6a6a48"/><rect x="30.3" y="46.5" width="1.7" height="3.0" fill="#6a6a48"/><rect x="24.3" y="52.3" width="2.5" height="3.9" fill="#6c7c4c"/><rect x="28.0" y="37.1" width="2.6" height="2.7" fill="#2c2c22"/><rect x="27.6" y="37.1" width="2.4" height="2.2" fill="#2c2c22"/><rect x="28.5" y="23.2" width="3.3" height="2.2" fill="#3c4a2c"/><rect x="33.5" y="36.6" width="3.1" height="2.5" fill="#5a4a3a"/><rect x="16.3" y="24.6" width="2.5" height="3.0" fill="#7a8a5a"/><rect x="16.8" y="50.8" width="2.6" height="2.7" fill="#4c6c3c"/><rect x="16.1" y="15.0" width="3.5" height="3.8" fill="#8a3a30"/><rect x="38.5" y="46.9" width="3.0" height="1.8" fill="#2c2c22"/><rect x="25.0" y="15.8" width="3.7" height="2.4" fill="#8a3a30"/><rect x="18.0" y="30.3" width="3.2" height="2.6" fill="#2c2c22"/><rect x="30.4" y="40.9" width="2.4" height="3.4" fill="#4c6c3c"/><rect x="37.9" y="43.2" width="2.1" height="1.8" fill="#7a8a5a"/><rect x="33.8" y="38.3" width="2.4" height="2.2" fill="#2c2c22"/><rect x="31.8" y="19.0" width="2.2" height="2.1" fill="#4c6c3c"/><rect x="27.1" y="39.6" width="2.0" height="3.2" fill="#6a6a48"/><rect x="15.2" y="22.1" width="1.6" height="1.6" fill="#4c6c3c"/><rect x="28.0" y="13.8" width="1.7" height="3.2" fill="#4c6c3c"/><rect x="30.1" y="27.2" width="2.7" height="2.0" fill="#7a8a5a"/><rect x="26.9" y="16.5" width="3.7" height="3.5" fill="#6c7c4c"/><rect x="34.4" y="38.3" width="3.4" height="2.0" fill="#6c7c4c"/><rect x="32.9" y="27.9" width="1.9" height="1.9" fill="#7a8a5a"/><rect x="22.0" y="44.3" width="3.6" height="2.0" fill="#7a8a5a"/><rect x="28.9" y="31.1" width="2.3" height="2.9" fill="#5a4a3a"/><rect x="28.5" y="32.1" width="3.2" height="2.2" fill="#3c4a2c"/><rect x="16.8" y="20.1" width="3.2" height="1.7" fill="#2c2c22"/><rect x="26.9" y="44.5" width="2.3" height="3.7" fill="#4c6c3c"/><rect x="23.6" y="42.8" width="2.4" height="1.8" fill="#6c7c4c"/><rect x="28.7" y="51.4" width="3.8" height="3.8" fill="#6c7c4c"/><rect x="27.7" y="54.7" width="2.6" height="2.1" fill="#2c2c22"/><rect x="21.0" y="26.7" width="2.4" height="2.4" fill="#5a4a3a"/></g><circle cx="28.5" cy="28" r="14.3" stroke="#5b97d9" stroke-width="3.9" fill="none"/><path d="M25 21L35 28L25 35Z" fill="#5b97d9"/></svg>
<div class="t" style="left:67.2px;top:278.11px;font-size:11.7px;color:#f6f6f6;letter-spacing:0px;">Balcón en San Luis - Luis 2.mp3 sonido hi...</div>
<div class="t" style="right:683.05px;top:278.51px;font-size:11.4px;color:#f6f6f6;background:#5b97d9;padding-left:1px;letter-spacing:-0.05px">41.76s</div>
<svg class="abs" style="left:67px;top:290.11px" width="267" height="30"><g transform="translate(0,15)"><path d="M0 0 L0.0 -2.11 L1.2 -2.12 L2.4 -2.82 L3.6 -2.71 L4.8 -3.09 L6.1 -4.27 L7.3 -5.06 L8.5 -4.99 L9.7 -5.80 L10.9 -5.80 L12.1 -5.02 L13.3 -5.31 L14.5 -4.18 L15.7 -4.00 L17.0 -3.52 L18.2 -3.16 L19.4 -2.87 L20.6 -2.80 L21.8 -3.03 L23.0 -2.69 L24.2 -3.03 L25.4 -2.99 L26.7 -2.90 L27.9 -2.76 L29.1 -2.83 L30.3 -2.92 L31.5 -3.08 L32.7 -3.04 L33.9 -3.14 L35.1 -3.21 L36.3 -3.13 L37.6 -3.17 L38.8 -2.85 L40.0 -3.04 L41.2 -2.67 L42.4 -2.68 L43.6 -2.62 L44.8 -2.94 L46.0 -3.01 L47.2 -3.35 L48.5 -4.29 L49.7 -4.97 L50.9 -4.43 L52.1 -4.31 L53.3 -4.39 L54.5 -4.37 L55.7 -4.62 L56.9 -4.49 L58.1 -3.91 L59.4 -3.26 L60.6 -3.01 L61.8 -2.90 L63.0 -3.11 L64.2 -2.91 L65.4 -2.70 L66.6 -3.06 L67.8 -3.06 L69.0 -3.27 L70.3 -3.48 L71.5 -3.76 L72.7 -4.19 L73.9 -4.29 L75.1 -4.62 L76.3 -3.80 L77.5 -4.37 L78.7 -3.69 L80.0 -3.29 L81.2 -2.88 L82.4 -2.71 L83.6 -2.62 L84.8 -2.87 L86.0 -2.88 L87.2 -2.72 L88.4 -2.94 L89.6 -2.68 L90.9 -2.86 L92.1 -2.73 L93.3 -2.99 L94.5 -3.25 L95.7 -3.48 L96.9 -4.25 L98.1 -4.14 L99.3 -4.34 L100.5 -5.19 L101.8 -4.55 L103.0 -4.99 L104.2 -4.72 L105.4 -3.88 L106.6 -3.55 L107.8 -3.01 L109.0 -2.78 L110.2 -3.02 L111.4 -2.61 L112.7 -2.93 L113.9 -2.83 L115.1 -3.07 L116.3 -3.09 L117.5 -3.09 L118.7 -3.04 L119.9 -3.20 L121.1 -3.87 L122.3 -4.26 L123.6 -5.12 L124.8 -5.61 L126.0 -5.44 L127.2 -4.97 L128.4 -4.19 L129.6 -4.00 L130.8 -3.49 L132.0 -3.03 L133.2 -2.71 L134.5 -2.72 L135.7 -2.67 L136.9 -2.76 L138.1 -2.58 L139.3 -2.94 L140.5 -3.07 L141.7 -3.01 L142.9 -2.64 L144.2 -2.65 L145.4 -4.42 L146.6 -9.29 L147.8 -8.31 L149.0 -3.41 L150.2 -2.97 L151.4 -2.62 L152.6 -2.69 L153.8 -3.05 L155.1 -3.68 L156.3 -3.98 L157.5 -4.34 L158.7 -4.64 L159.9 -4.18 L161.1 -4.58 L162.3 -4.63 L163.5 -4.62 L164.7 -3.79 L166.0 -3.28 L167.2 -2.88 L168.4 -2.77 L169.6 -2.80 L170.8 -2.54 L172.0 -2.63 L173.2 -3.01 L174.4 -4.49 L175.6 -10.85 L176.9 -14.06 L178.1 -5.74 L179.3 -3.10 L180.5 -3.03 L181.7 -2.67 L182.9 -2.44 L184.1 -2.78 L185.3 -2.55 L186.5 -2.90 L187.8 -2.57 L189.0 -2.46 L190.2 -2.73 L191.4 -3.04 L192.6 -3.10 L193.8 -3.12 L195.0 -3.52 L196.2 -8.51 L197.5 -10.10 L198.7 -5.57 L199.9 -2.77 L201.1 -2.57 L202.3 -2.84 L203.5 -2.74 L204.7 -2.68 L205.9 -2.49 L207.1 -2.94 L208.4 -3.55 L209.6 -9.02 L210.8 -12.48 L212.0 -6.02 L213.2 -3.24 L214.4 -2.70 L215.6 -3.00 L216.8 -2.87 L218.0 -2.64 L219.3 -2.54 L220.5 -2.56 L221.7 -2.79 L222.9 -2.67 L224.1 -2.69 L225.3 -2.79 L226.5 -2.63 L227.7 -2.70 L228.9 -2.55 L230.2 -2.57 L231.4 -2.49 L232.6 -2.73 L233.8 -3.15 L235.0 -3.90 L236.2 -4.43 L237.4 -4.72 L238.6 -5.25 L239.8 -4.59 L241.1 -4.64 L242.3 -4.97 L243.5 -4.35 L244.7 -3.50 L245.9 -2.98 L247.1 -3.04 L248.3 -2.79 L249.5 -2.81 L250.8 -3.18 L252.0 -3.45 L253.2 -3.80 L254.4 -4.61 L255.6 -4.35 L256.8 -4.44 L258.0 -4.06 L259.2 -3.87 L260.4 -3.32 L261.7 -2.96 L262.9 -2.63 L264.1 -2.93 L265.3 -2.50 L266.5 -2.50 L266.5 2.42 L265.3 2.57 L264.1 3.00 L262.9 2.75 L261.7 2.85 L260.4 3.45 L259.2 4.13 L258.0 4.17 L256.8 4.46 L255.6 4.09 L254.4 4.61 L253.2 3.72 L252.0 3.56 L250.8 3.26 L249.5 2.84 L248.3 2.66 L247.1 3.10 L245.9 3.04 L244.7 3.33 L243.5 4.61 L242.3 5.08 L241.1 4.38 L239.8 4.89 L238.6 4.97 L237.4 4.60 L236.2 4.58 L235.0 3.95 L233.8 3.17 L232.6 2.79 L231.4 2.47 L230.2 2.50 L228.9 2.43 L227.7 2.53 L226.5 2.71 L225.3 2.90 L224.1 2.70 L222.9 2.77 L221.7 2.74 L220.5 2.47 L219.3 2.50 L218.0 2.79 L216.8 2.67 L215.6 3.00 L214.4 2.60 L213.2 3.37 L212.0 5.88 L210.8 12.17 L209.6 8.89 L208.4 3.57 L207.1 3.06 L205.9 2.43 L204.7 2.82 L203.5 2.58 L202.3 2.74 L201.1 2.41 L199.9 2.60 L198.7 5.81 L197.5 10.45 L196.2 8.11 L195.0 3.35 L193.8 3.08 L192.6 3.21 L191.4 3.18 L190.2 2.83 L189.0 2.49 L187.8 2.43 L186.5 2.86 L185.3 2.43 L184.1 2.80 L182.9 2.47 L181.7 2.56 L180.5 2.91 L179.3 3.23 L178.1 5.34 L176.9 14.70 L175.6 11.49 L174.4 4.79 L173.2 2.96 L172.0 2.65 L170.8 2.58 L169.6 2.86 L168.4 2.97 L167.2 2.96 L166.0 3.19 L164.7 4.00 L163.5 4.61 L162.3 4.70 L161.1 4.73 L159.9 3.87 L158.7 4.82 L157.5 4.45 L156.3 3.97 L155.1 3.69 L153.8 3.03 L152.6 2.57 L151.4 2.63 L150.2 2.76 L149.0 3.42 L147.8 8.49 L146.6 9.21 L145.4 4.46 L144.2 2.83 L142.9 2.79 L141.7 2.85 L140.5 3.20 L139.3 3.00 L138.1 2.41 L136.9 2.70 L135.7 2.56 L134.5 2.55 L133.2 2.72 L132.0 3.23 L130.8 3.40 L129.6 4.22 L128.4 4.31 L127.2 4.69 L126.0 5.73 L124.8 5.70 L123.6 5.44 L122.3 4.40 L121.1 4.01 L119.9 3.12 L118.7 3.17 L117.5 3.29 L116.3 3.25 L115.1 3.04 L113.9 2.94 L112.7 2.93 L111.4 2.46 L110.2 2.82 L109.0 2.61 L107.8 2.87 L106.6 3.37 L105.4 3.87 L104.2 4.86 L103.0 5.02 L101.8 4.49 L100.5 5.30 L99.3 4.21 L98.1 4.12 L96.9 4.42 L95.7 3.43 L94.5 3.10 L93.3 3.17 L92.1 2.82 L90.9 2.80 L89.6 2.63 L88.4 2.96 L87.2 2.76 L86.0 2.76 L84.8 2.66 L83.6 2.51 L82.4 2.83 L81.2 2.73 L80.0 3.27 L78.7 3.52 L77.5 4.18 L76.3 3.62 L75.1 4.55 L73.9 4.07 L72.7 3.89 L71.5 3.54 L70.3 3.31 L69.0 3.27 L67.8 2.86 L66.6 2.84 L65.4 2.68 L64.2 2.87 L63.0 3.20 L61.8 2.70 L60.6 2.97 L59.4 3.21 L58.1 3.63 L56.9 4.80 L55.7 4.42 L54.5 4.10 L53.3 4.37 L52.1 4.09 L50.9 4.51 L49.7 4.85 L48.5 4.04 L47.2 3.12 L46.0 3.11 L44.8 2.84 L43.6 2.73 L42.4 2.67 L41.2 2.85 L40.0 2.95 L38.8 2.75 L37.6 3.05 L36.3 3.28 L35.1 3.27 L33.9 3.06 L32.7 2.86 L31.5 3.16 L30.3 3.13 L29.1 2.87 L27.9 2.55 L26.7 2.69 L25.4 2.81 L24.2 2.88 L23.0 2.51 L21.8 2.82 L20.6 2.86 L19.4 3.05 L18.2 3.02 L17.0 3.77 L15.7 3.98 L14.5 4.37 L13.3 5.64 L12.1 5.35 L10.9 5.40 L9.7 5.63 L8.5 5.07 L7.3 5.40 L6.1 4.00 L4.8 2.99 L3.6 2.85 L2.4 2.65 L1.2 2.08 L0.0 2.06 Z" fill="#efefef"/></g></svg>
<div class="abs" style="left:0;top:339.83px;width:340px;height:28.07px;background:#4a807a"></div>
<div class="t" style="left:4.6px;top:347.23px;font-size:13.3px;letter-spacing:0.08px;color:#f4f4f4">entrevista</div>
<div class="abs" style="left:0;top:367.50px;width:340px;height:28.6px;background:#4dc3b6"></div>
<div class="t" style="left:6.7px;top:376.70px;font-size:11.8px;color:#3a6f69">Pulsa sobre el nombre de la pista para añadir sonidos.</div>
<div class="abs" style="left:0;top:395.83px;width:340px;height:28.07px;background:#7b6443"></div>
<div class="t" style="left:4.6px;top:403.23px;font-size:13.3px;letter-spacing:-0.14px;color:#f4f4f4">Pista-3 EL TIMBRE</div>
<svg class="abs" style="left:317px;top:400.33px" width="19" height="19"><circle cx="9.5" cy="9.5" r="7.6" stroke="#dedede" stroke-width="1.35" fill="none"/><path d="M7.8 6.3L12.6 9.5L7.8 12.7Z" fill="#dedede"/></svg>
<div class="abs" style="left:0;top:423.50px;width:340px;height:65.12px;background:#b9853f"></div>
<svg class="abs" style="left:4px;top:427.50px" width="57" height="57" viewBox="0 0 57 57" preserveAspectRatio="none"><defs><filter id="bl20"><feGaussianBlur stdDeviation="0.7"/></filter></defs><g filter="url(#bl20)"><rect width="57" height="57" fill="#7d95a2"/><rect y="28" width="57" height="29" fill="#5a6c7a"/><rect x="44" y="10" width="13" height="20" fill="#8aa88a"/><path d="M6 22Q14 4 34 1Q50 3 54 22L52 38L46 40L40 30L18 32L12 40Z" fill="#1c1e2c"/><path d="M20 20L44 22L44 42Q32 48 20 40Z" fill="#d2b49c"/><path d="M0 48L14 44L40 44L57 52L57 57L0 57Z" fill="#22252f"/><path d="M2 48L18 45L16 49L2 51Z" fill="#7aa04a"/></g><circle cx="28.5" cy="28" r="14.3" stroke="#b9853f" stroke-width="3.9" fill="none"/><path d="M25 21L35 28L25 35Z" fill="#b9853f"/></svg>
<div class="t" style="left:67.2px;top:426.50px;font-size:11.7px;color:#f6f6f6;letter-spacing:-0.085px;">SPOAMR 08 High Mountains and Running ...</div>
<div class="t" style="right:683.40px;top:426.90px;font-size:11.4px;color:#f6f6f6;background:#b9853f;padding-left:1px;letter-spacing:-0.4px">18.18s</div>
<svg class="abs" style="left:67px;top:438.50px" width="267" height="30"><g transform="translate(0,15)"><path d="M0 0 L0.0 -2.17 L1.2 -2.51 L2.4 -3.44 L3.6 -3.93 L4.8 -3.26 L6.1 -2.76 L7.3 -2.35 L8.5 -2.22 L9.7 -2.47 L10.9 -2.58 L12.1 -2.40 L13.3 -2.51 L14.5 -2.65 L15.7 -2.58 L17.0 -2.49 L18.2 -2.43 L19.4 -2.63 L20.6 -2.54 L21.8 -2.67 L23.0 -2.73 L24.2 -2.57 L25.4 -2.53 L26.7 -2.30 L27.9 -2.51 L29.1 -2.23 L30.3 -2.20 L31.5 -2.29 L32.7 -2.59 L33.9 -2.45 L35.1 -2.49 L36.3 -2.37 L37.6 -2.30 L38.8 -2.55 L40.0 -2.26 L41.2 -2.46 L42.4 -2.30 L43.6 -2.19 L44.8 -2.07 L46.0 -2.43 L47.2 -2.53 L48.5 -2.23 L49.7 -2.55 L50.9 -2.43 L52.1 -2.47 L53.3 -2.33 L54.5 -2.34 L55.7 -2.31 L56.9 -2.27 L58.1 -2.11 L59.4 -2.40 L60.6 -2.29 L61.8 -2.59 L63.0 -2.35 L64.2 -2.15 L65.4 -2.36 L66.6 -2.15 L67.8 -2.15 L69.0 -2.09 L70.3 -2.38 L71.5 -2.63 L72.7 -2.39 L73.9 -2.16 L75.1 -2.16 L76.3 -2.44 L77.5 -2.19 L78.7 -2.16 L80.0 -2.15 L81.2 -2.10 L82.4 -2.47 L83.6 -2.74 L84.8 -3.00 L86.0 -3.39 L87.2 -3.34 L88.4 -3.43 L89.6 -3.40 L90.9 -2.75 L92.1 -2.65 L93.3 -2.65 L94.5 -2.60 L95.7 -2.38 L96.9 -2.62 L98.1 -2.74 L99.3 -2.66 L100.5 -2.73 L101.8 -2.80 L103.0 -2.38 L104.2 -2.46 L105.4 -2.55 L106.6 -2.34 L107.8 -2.58 L109.0 -2.68 L110.2 -2.69 L111.4 -2.74 L112.7 -2.76 L113.9 -2.67 L115.1 -2.76 L116.3 -2.68 L117.5 -2.51 L118.7 -2.97 L119.9 -3.39 L121.1 -2.92 L122.3 -2.83 L123.6 -2.34 L124.8 -2.49 L126.0 -2.46 L127.2 -2.57 L128.4 -2.35 L129.6 -2.61 L130.8 -2.31 L132.0 -2.55 L133.2 -2.44 L134.5 -2.56 L135.7 -2.67 L136.9 -2.44 L138.1 -2.38 L139.3 -2.22 L140.5 -2.15 L141.7 -2.27 L142.9 -2.36 L144.2 -2.48 L145.4 -2.35 L146.6 -2.37 L147.8 -2.38 L149.0 -2.26 L150.2 -2.26 L151.4 -2.57 L152.6 -2.57 L153.8 -2.39 L155.1 -2.38 L156.3 -2.29 L157.5 -2.49 L158.7 -2.42 L159.9 -2.54 L161.1 -2.55 L162.3 -2.27 L163.5 -2.49 L164.7 -2.65 L166.0 -2.56 L167.2 -2.54 L168.4 -2.42 L169.6 -2.26 L170.8 -2.28 L172.0 -2.22 L173.2 -3.06 L174.4 -3.89 L175.6 -4.04 L176.9 -3.87 L178.1 -3.46 L179.3 -2.98 L180.5 -2.40 L181.7 -2.46 L182.9 -2.48 L184.1 -2.34 L185.3 -2.32 L186.5 -2.56 L187.8 -2.39 L189.0 -2.32 L190.2 -2.68 L191.4 -2.70 L192.6 -3.11 L193.8 -3.13 L195.0 -3.17 L196.2 -3.12 L197.5 -2.72 L198.7 -2.52 L199.9 -2.22 L201.1 -2.55 L202.3 -2.52 L203.5 -2.26 L204.7 -2.19 L205.9 -2.49 L207.1 -2.27 L208.4 -2.23 L209.6 -2.15 L210.8 -2.36 L212.0 -2.61 L213.2 -2.52 L214.4 -2.26 L215.6 -2.24 L216.8 -2.10 L218.0 -2.14 L219.3 -2.37 L220.5 -2.46 L221.7 -2.62 L222.9 -2.54 L224.1 -2.58 L225.3 -2.49 L226.5 -2.62 L227.7 -2.29 L228.9 -2.53 L230.2 -2.41 L231.4 -2.59 L232.6 -2.44 L233.8 -2.18 L235.0 -2.05 L236.2 -2.05 L237.4 -2.40 L238.6 -2.27 L239.8 -2.34 L241.1 -2.31 L242.3 -2.90 L243.5 -3.53 L244.7 -3.69 L245.9 -3.65 L247.1 -2.95 L248.3 -2.79 L249.5 -2.63 L250.8 -2.54 L252.0 -2.53 L253.2 -2.64 L254.4 -2.43 L255.6 -2.48 L256.8 -2.60 L258.0 -2.70 L259.2 -2.63 L260.4 -2.57 L261.7 -2.73 L262.9 -2.35 L264.1 -2.38 L265.3 -1.95 L266.5 -1.82 L266.5 1.89 L265.3 2.07 L264.1 2.45 L262.9 2.22 L261.7 2.92 L260.4 2.69 L259.2 2.63 L258.0 2.50 L256.8 2.74 L255.6 2.52 L254.4 2.47 L253.2 2.45 L252.0 2.62 L250.8 2.36 L249.5 2.63 L248.3 2.64 L247.1 2.89 L245.9 3.86 L244.7 3.83 L243.5 3.69 L242.3 2.81 L241.1 2.27 L239.8 2.38 L238.6 2.11 L237.4 2.37 L236.2 2.20 L235.0 2.13 L233.8 2.30 L232.6 2.36 L231.4 2.66 L230.2 2.52 L228.9 2.61 L227.7 2.27 L226.5 2.49 L225.3 2.31 L224.1 2.73 L222.9 2.71 L221.7 2.53 L220.5 2.56 L219.3 2.34 L218.0 2.19 L216.8 2.21 L215.6 2.18 L214.4 2.30 L213.2 2.43 L212.0 2.62 L210.8 2.20 L209.6 2.07 L208.4 2.16 L207.1 2.41 L205.9 2.35 L204.7 2.27 L203.5 2.12 L202.3 2.71 L201.1 2.42 L199.9 2.09 L198.7 2.41 L197.5 2.90 L196.2 3.20 L195.0 3.36 L193.8 3.13 L192.6 2.93 L191.4 2.64 L190.2 2.67 L189.0 2.49 L187.8 2.27 L186.5 2.46 L185.3 2.44 L184.1 2.21 L182.9 2.66 L181.7 2.38 L180.5 2.42 L179.3 3.05 L178.1 3.67 L176.9 3.62 L175.6 4.25 L174.4 3.71 L173.2 3.16 L172.0 2.06 L170.8 2.37 L169.6 2.15 L168.4 2.32 L167.2 2.36 L166.0 2.49 L164.7 2.58 L163.5 2.67 L162.3 2.30 L161.1 2.50 L159.9 2.73 L158.7 2.30 L157.5 2.38 L156.3 2.45 L155.1 2.54 L153.8 2.46 L152.6 2.76 L151.4 2.40 L150.2 2.40 L149.0 2.33 L147.8 2.44 L146.6 2.49 L145.4 2.21 L144.2 2.37 L142.9 2.23 L141.7 2.26 L140.5 2.16 L139.3 2.24 L138.1 2.33 L136.9 2.53 L135.7 2.81 L134.5 2.66 L133.2 2.27 L132.0 2.42 L130.8 2.21 L129.6 2.51 L128.4 2.38 L127.2 2.45 L126.0 2.50 L124.8 2.43 L123.6 2.29 L122.3 2.92 L121.1 3.11 L119.9 3.23 L118.7 2.90 L117.5 2.69 L116.3 2.56 L115.1 2.56 L113.9 2.54 L112.7 2.89 L111.4 2.83 L110.2 2.87 L109.0 2.68 L107.8 2.40 L106.6 2.27 L105.4 2.64 L104.2 2.42 L103.0 2.25 L101.8 2.75 L100.5 2.71 L99.3 2.60 L98.1 2.72 L96.9 2.48 L95.7 2.21 L94.5 2.71 L93.3 2.74 L92.1 2.62 L90.9 2.59 L89.6 3.29 L88.4 3.46 L87.2 3.53 L86.0 3.38 L84.8 3.21 L83.6 2.75 L82.4 2.36 L81.2 2.13 L80.0 2.18 L78.7 2.20 L77.5 2.26 L76.3 2.27 L75.1 2.14 L73.9 2.26 L72.7 2.26 L71.5 2.45 L70.3 2.27 L69.0 2.02 L67.8 2.13 L66.6 2.09 L65.4 2.41 L64.2 2.04 L63.0 2.29 L61.8 2.66 L60.6 2.31 L59.4 2.56 L58.1 2.25 L56.9 2.19 L55.7 2.25 L54.5 2.35 L53.3 2.35 L52.1 2.42 L50.9 2.56 L49.7 2.43 L48.5 2.22 L47.2 2.39 L46.0 2.57 L44.8 2.10 L43.6 2.35 L42.4 2.18 L41.2 2.54 L40.0 2.29 L38.8 2.38 L37.6 2.41 L36.3 2.51 L35.1 2.34 L33.9 2.61 L32.7 2.70 L31.5 2.32 L30.3 2.22 L29.1 2.15 L27.9 2.34 L26.7 2.29 L25.4 2.67 L24.2 2.46 L23.0 2.72 L21.8 2.59 L20.6 2.61 L19.4 2.82 L18.2 2.57 L17.0 2.41 L15.7 2.54 L14.5 2.45 L13.3 2.53 L12.1 2.52 L10.9 2.72 L9.7 2.31 L8.5 2.19 L7.3 2.20 L6.1 2.73 L4.8 3.46 L3.6 3.81 L2.4 3.62 L1.2 2.69 L0.0 2.27 Z" fill="#efefef"/></g></svg>
<div class="abs" style="left:0;top:488.22px;width:340px;height:28.07px;background:#518844"></div>
<div class="t" style="left:4.6px;top:495.62px;font-size:13.3px;letter-spacing:0px;color:#f4f4f4">Pista-4 CAMPANA</div>
<svg class="abs" style="left:317px;top:492.72px" width="19" height="19"><circle cx="9.5" cy="9.5" r="7.6" stroke="#dedede" stroke-width="1.35" fill="none"/><path d="M7.8 6.3L12.6 9.5L7.8 12.7Z" fill="#dedede"/></svg>
<div class="abs" style="left:0;top:515.89px;width:340px;height:65.12px;background:#5dd540"></div>
<svg class="abs" style="left:4px;top:519.89px" width="57" height="57" viewBox="0 0 57 57" preserveAspectRatio="none"><defs><filter id="bl30"><feGaussianBlur stdDeviation="0.7"/></filter></defs><g filter="url(#bl30)"><rect width="57" height="57" fill="#5e4642"/><rect y="36" width="57" height="21" fill="#7a6258"/><rect x="22" y="0" width="24" height="57" fill="#2c282c"/><rect x="44" y="0" width="13" height="32" fill="#6a3028"/><rect x="44" y="18" width="13" height="10" fill="#d8a428"/><path d="M2 24Q10 18 20 24L18 34Q10 38 4 32Z" fill="#b02c50"/><rect x="20" y="18" width="24" height="5" fill="#8a40b0"/><rect x="46" y="24" width="6" height="6" fill="#40c0d0"/><text x="28" y="56" text-anchor="middle" font-size="11" font-weight="bold" fill="#d8d8d8" font-family="Liberation Sans">aña</text></g><circle cx="28.5" cy="28" r="14.3" stroke="#5dd540" stroke-width="3.9" fill="none"/><path d="M25 21L35 28L25 35Z" fill="#5dd540"/></svg>
<div class="t" style="left:67.2px;top:518.89px;font-size:11.7px;color:#f6f6f6;letter-spacing:0px;">B1. Hymns for purifying water, Etc. (Popular...</div>
<div class="t" style="right:682.70px;top:519.29px;font-size:11.4px;color:#f6f6f6;background:#5dd540;padding-left:1px;letter-spacing:0.3px">9.76s</div>
<svg class="abs" style="left:67px;top:530.89px" width="267" height="30"><g transform="translate(0,15)"><path d="M0 0 L0.0 -2.54 L1.2 -3.26 L2.4 -4.62 L3.6 -3.77 L4.8 -3.50 L6.1 -3.03 L7.3 -2.69 L8.5 -2.60 L9.7 -2.30 L10.9 -2.29 L12.1 -2.53 L13.3 -2.66 L14.5 -2.64 L15.7 -2.32 L17.0 -2.27 L18.2 -2.62 L19.4 -2.46 L20.6 -2.50 L21.8 -2.35 L23.0 -2.52 L24.2 -2.71 L25.4 -2.53 L26.7 -2.34 L27.9 -2.32 L29.1 -2.16 L30.3 -2.25 L31.5 -2.53 L32.7 -2.43 L33.9 -2.56 L35.1 -2.77 L36.3 -2.76 L37.6 -2.39 L38.8 -2.38 L40.0 -2.19 L41.2 -2.19 L42.4 -2.19 L43.6 -2.56 L44.8 -2.45 L46.0 -2.49 L47.2 -2.30 L48.5 -2.55 L49.7 -2.29 L50.9 -2.19 L52.1 -2.40 L53.3 -2.37 L54.5 -2.46 L55.7 -2.39 L56.9 -2.23 L58.1 -2.46 L59.4 -2.31 L60.6 -2.65 L61.8 -2.53 L63.0 -2.56 L64.2 -2.51 L65.4 -2.28 L66.6 -2.16 L67.8 -2.50 L69.0 -2.61 L70.3 -2.62 L71.5 -2.36 L72.7 -2.26 L73.9 -2.28 L75.1 -2.64 L76.3 -2.81 L77.5 -2.65 L78.7 -2.56 L80.0 -2.48 L81.2 -2.43 L82.4 -2.70 L83.6 -2.60 L84.8 -2.34 L86.0 -2.56 L87.2 -2.46 L88.4 -2.62 L89.6 -2.64 L90.9 -2.50 L92.1 -2.39 L93.3 -2.58 L94.5 -2.44 L95.7 -2.54 L96.9 -2.28 L98.1 -2.26 L99.3 -2.36 L100.5 -2.51 L101.8 -2.43 L103.0 -2.58 L104.2 -2.47 L105.4 -2.67 L106.6 -2.82 L107.8 -2.67 L109.0 -2.42 L110.2 -2.68 L111.4 -2.68 L112.7 -2.71 L113.9 -2.74 L115.1 -2.70 L116.3 -2.66 L117.5 -2.65 L118.7 -2.34 L119.9 -2.39 L121.1 -2.30 L122.3 -2.47 L123.6 -2.47 L124.8 -2.26 L126.0 -2.29 L127.2 -2.24 L128.4 -2.35 L129.6 -2.48 L130.8 -2.36 L132.0 -2.18 L133.2 -2.23 L134.5 -2.17 L135.7 -2.27 L136.9 -2.44 L138.1 -2.49 L139.3 -2.54 L140.5 -2.68 L141.7 -2.75 L142.9 -2.56 L144.2 -2.58 L145.4 -2.77 L146.6 -2.69 L147.8 -2.79 L149.0 -2.45 L150.2 -2.53 L151.4 -2.58 L152.6 -2.48 L153.8 -2.35 L155.1 -2.66 L156.3 -2.81 L157.5 -2.70 L158.7 -2.84 L159.9 -2.63 L161.1 -2.81 L162.3 -2.55 L163.5 -2.33 L164.7 -2.39 L166.0 -2.59 L167.2 -2.30 L168.4 -2.29 L169.6 -2.53 L170.8 -2.40 L172.0 -2.69 L173.2 -2.65 L174.4 -2.65 L175.6 -2.70 L176.9 -2.75 L178.1 -2.81 L179.3 -3.23 L180.5 -3.95 L181.7 -4.35 L182.9 -3.17 L184.1 -2.72 L185.3 -2.68 L186.5 -2.33 L187.8 -2.38 L189.0 -2.54 L190.2 -2.51 L191.4 -2.45 L192.6 -2.65 L193.8 -2.47 L195.0 -2.27 L196.2 -2.48 L197.5 -2.38 L198.7 -2.65 L199.9 -2.56 L201.1 -2.53 L202.3 -2.34 L203.5 -2.58 L204.7 -2.40 L205.9 -2.60 L207.1 -2.31 L208.4 -2.65 L209.6 -2.67 L210.8 -2.76 L212.0 -2.70 L213.2 -2.71 L214.4 -2.50 L215.6 -2.32 L216.8 -2.37 L218.0 -2.50 L219.3 -2.30 L220.5 -2.19 L221.7 -2.38 L222.9 -2.63 L224.1 -2.53 L225.3 -2.57 L226.5 -2.75 L227.7 -2.40 L228.9 -2.28 L230.2 -2.39 L231.4 -2.47 L232.6 -2.37 L233.8 -2.31 L235.0 -2.41 L236.2 -2.32 L237.4 -2.53 L238.6 -2.62 L239.8 -2.35 L241.1 -2.22 L242.3 -2.41 L243.5 -2.64 L244.7 -2.48 L245.9 -2.26 L247.1 -2.15 L248.3 -2.55 L249.5 -2.39 L250.8 -2.68 L252.0 -2.75 L253.2 -2.69 L254.4 -2.46 L255.6 -2.54 L256.8 -2.46 L258.0 -2.65 L259.2 -2.73 L260.4 -2.79 L261.7 -2.69 L262.9 -2.72 L264.1 -2.41 L265.3 -1.84 L266.5 -2.08 L266.5 2.16 L265.3 1.71 L264.1 2.40 L262.9 2.87 L261.7 2.74 L260.4 2.76 L259.2 2.71 L258.0 2.49 L256.8 2.33 L255.6 2.41 L254.4 2.42 L253.2 2.64 L252.0 2.91 L250.8 2.54 L249.5 2.30 L248.3 2.47 L247.1 2.05 L245.9 2.18 L244.7 2.38 L243.5 2.64 L242.3 2.24 L241.1 2.36 L239.8 2.31 L238.6 2.79 L237.4 2.60 L236.2 2.38 L235.0 2.40 L233.8 2.47 L232.6 2.23 L231.4 2.54 L230.2 2.32 L228.9 2.34 L227.7 2.49 L226.5 2.61 L225.3 2.45 L224.1 2.35 L222.9 2.52 L221.7 2.23 L220.5 2.15 L219.3 2.47 L218.0 2.45 L216.8 2.30 L215.6 2.31 L214.4 2.42 L213.2 2.80 L212.0 2.79 L210.8 2.62 L209.6 2.57 L208.4 2.71 L207.1 2.46 L205.9 2.65 L204.7 2.38 L203.5 2.76 L202.3 2.17 L201.1 2.36 L199.9 2.67 L198.7 2.61 L197.5 2.22 L196.2 2.50 L195.0 2.44 L193.8 2.48 L192.6 2.59 L191.4 2.30 L190.2 2.35 L189.0 2.69 L187.8 2.37 L186.5 2.48 L185.3 2.50 L184.1 2.61 L182.9 2.95 L181.7 4.28 L180.5 3.69 L179.3 3.11 L178.1 2.77 L176.9 2.67 L175.6 2.52 L174.4 2.46 L173.2 2.84 L172.0 2.57 L170.8 2.40 L169.6 2.50 L168.4 2.30 L167.2 2.16 L166.0 2.51 L164.7 2.25 L163.5 2.35 L162.3 2.71 L161.1 2.85 L159.9 2.77 L158.7 2.72 L157.5 2.51 L156.3 2.83 L155.1 2.66 L153.8 2.38 L152.6 2.43 L151.4 2.63 L150.2 2.62 L149.0 2.60 L147.8 2.71 L146.6 2.67 L145.4 2.90 L144.2 2.47 L142.9 2.41 L141.7 2.67 L140.5 2.51 L139.3 2.64 L138.1 2.61 L136.9 2.37 L135.7 2.15 L134.5 2.04 L133.2 2.14 L132.0 2.04 L130.8 2.33 L129.6 2.51 L128.4 2.26 L127.2 2.09 L126.0 2.36 L124.8 2.11 L123.6 2.36 L122.3 2.39 L121.1 2.26 L119.9 2.25 L118.7 2.31 L117.5 2.58 L116.3 2.77 L115.1 2.73 L113.9 2.91 L112.7 2.77 L111.4 2.79 L110.2 2.71 L109.0 2.40 L107.8 2.80 L106.6 2.89 L105.4 2.85 L104.2 2.55 L103.0 2.66 L101.8 2.34 L100.5 2.62 L99.3 2.32 L98.1 2.14 L96.9 2.13 L95.7 2.42 L94.5 2.35 L93.3 2.65 L92.1 2.31 L90.9 2.34 L89.6 2.75 L88.4 2.64 L87.2 2.29 L86.0 2.39 L84.8 2.21 L83.6 2.54 L82.4 2.84 L81.2 2.59 L80.0 2.53 L78.7 2.46 L77.5 2.62 L76.3 2.75 L75.1 2.57 L73.9 2.11 L72.7 2.29 L71.5 2.48 L70.3 2.71 L69.0 2.46 L67.8 2.51 L66.6 2.05 L65.4 2.35 L64.2 2.49 L63.0 2.73 L61.8 2.64 L60.6 2.50 L59.4 2.25 L58.1 2.61 L56.9 2.22 L55.7 2.36 L54.5 2.44 L53.3 2.47 L52.1 2.56 L50.9 2.20 L49.7 2.45 L48.5 2.58 L47.2 2.16 L46.0 2.61 L44.8 2.42 L43.6 2.39 L42.4 2.35 L41.2 2.03 L40.0 2.22 L38.8 2.37 L37.6 2.53 L36.3 2.72 L35.1 2.65 L33.9 2.48 L32.7 2.32 L31.5 2.56 L30.3 2.20 L29.1 2.24 L27.9 2.23 L26.7 2.29 L25.4 2.44 L24.2 2.90 L23.0 2.65 L21.8 2.47 L20.6 2.54 L19.4 2.42 L18.2 2.48 L17.0 2.38 L15.7 2.32 L14.5 2.46 L13.3 2.53 L12.1 2.38 L10.9 2.36 L9.7 2.44 L8.5 2.48 L7.3 2.81 L6.1 2.95 L4.8 3.59 L3.6 3.98 L2.4 4.70 L1.2 3.41 L0.0 2.50 Z" fill="#efefef"/></g></svg>
<div class="abs" style="left:0;top:580.61px;width:340px;height:28.07px;background:#5e5e83"></div>
<div class="t" style="left:4.6px;top:588.01px;font-size:13.3px;letter-spacing:0px;color:#f4f4f4">Pista-8</div>
<svg class="abs" style="left:317px;top:585.11px" width="19" height="19"><circle cx="9.5" cy="9.5" r="7.6" stroke="#dedede" stroke-width="1.35" fill="none"/><path d="M7.8 6.3L12.6 9.5L7.8 12.7Z" fill="#dedede"/></svg>
<div class="abs" style="left:0;top:608.28px;width:340px;height:65.12px;background:#7a79ca"></div>
<svg class="abs" style="left:4px;top:612.28px" width="57" height="57" viewBox="0 0 57 57" preserveAspectRatio="none"><defs><filter id="bl40"><feGaussianBlur stdDeviation="0.7"/></filter></defs><g filter="url(#bl40)"><rect width="57" height="57" fill="#eeeeee"/><path d="M0 2Q14 4 24 14L22 22Q10 14 0 12Z" fill="#d040d8"/><path d="M57 4Q46 12 40 16L42 24Q50 18 57 16Z" fill="#b040d8"/><path d="M57 26L57 32L52 30Z" fill="#c040d0"/><path d="M20 8Q30 4 42 10L44 24L20 24Z" fill="#454c66"/><circle cx="36" cy="15" r="1.5" fill="#e050c0"/><path d="M0 16Q20 14 40 22Q52 24 57 34L57 57L0 57Z" fill="#262c40"/><path d="M22 34Q40 28 52 40L54 57L20 57Z" fill="#4a5672"/><path d="M2 22Q12 30 8 46L0 48Z" fill="#1a1e2c"/><rect x="0" y="54" width="57" height="3" fill="#151515"/><path d="M0 50L6 54L0 54Z" fill="#eee"/></g><circle cx="28.5" cy="28" r="14.3" stroke="#7a79ca" stroke-width="3.9" fill="none"/><path d="M25 21L35 28L25 35Z" fill="#7a79ca"/></svg>
<div class="t" style="left:67.2px;top:611.28px;font-size:11.7px;color:#f6f6f6;letter-spacing:0.07px;">audion sin entrevista</div>
<div class="t" style="right:682.50px;top:611.68px;font-size:11.4px;color:#f6f6f6;background:#7a79ca;padding-left:1px;letter-spacing:0.5px">43.46s</div>
<svg class="abs" style="left:67px;top:623.28px" width="267" height="30"><g transform="translate(0,15)"><path d="M0 0 L0.0 -2.11 L1.2 -2.00 L2.4 -2.05 L3.6 -2.20 L4.8 -2.20 L6.1 -2.12 L7.3 -2.44 L8.5 -2.45 L9.7 -2.18 L10.9 -2.53 L12.1 -2.71 L13.3 -2.83 L14.5 -2.29 L15.7 -2.59 L17.0 -2.17 L18.2 -2.39 L19.4 -2.76 L20.6 -2.34 L21.8 -2.26 L23.0 -2.66 L24.2 -2.64 L25.4 -2.77 L26.7 -2.21 L27.9 -2.38 L29.1 -2.46 L30.3 -2.74 L31.5 -2.26 L32.7 -2.18 L33.9 -2.28 L35.1 -2.11 L36.3 -2.41 L37.6 -2.63 L38.8 -2.38 L40.0 -2.49 L41.2 -2.35 L42.4 -2.07 L43.6 -1.88 L44.8 -2.34 L46.0 -2.75 L47.2 -2.96 L48.5 -2.82 L49.7 -2.57 L50.9 -2.72 L52.1 -2.54 L53.3 -2.40 L54.5 -2.60 L55.7 -2.49 L56.9 -2.18 L58.1 -1.99 L59.4 -2.08 L60.6 -2.20 L61.8 -2.11 L63.0 -2.56 L64.2 -2.29 L65.4 -2.33 L66.6 -2.27 L67.8 -2.58 L69.0 -2.62 L70.3 -2.85 L71.5 -2.71 L72.7 -2.47 L73.9 -2.67 L75.1 -2.37 L76.3 -2.34 L77.5 -2.00 L78.7 -1.89 L80.0 -2.03 L81.2 -2.50 L82.4 -2.20 L83.6 -2.39 L84.8 -2.62 L86.0 -2.50 L87.2 -2.13 L88.4 -1.98 L89.6 -2.28 L90.9 -2.44 L92.1 -2.10 L93.3 -2.22 L94.5 -2.41 L95.7 -2.11 L96.9 -1.92 L98.1 -2.49 L99.3 -2.76 L100.5 -2.73 L101.8 -2.28 L103.0 -2.67 L104.2 -2.76 L105.4 -2.40 L106.6 -2.05 L107.8 -2.61 L109.0 -2.86 L110.2 -2.91 L111.4 -3.03 L112.7 -3.05 L113.9 -2.39 L115.1 -2.51 L116.3 -2.08 L117.5 -2.14 L118.7 -2.66 L119.9 -2.89 L121.1 -2.52 L122.3 -2.65 L123.6 -2.56 L124.8 -2.48 L126.0 -2.10 L127.2 -1.87 L128.4 -1.86 L129.6 -1.85 L130.8 -2.04 L132.0 -1.99 L133.2 -2.53 L134.5 -2.19 L135.7 -2.09 L136.9 -2.47 L138.1 -2.19 L139.3 -2.20 L140.5 -2.22 L141.7 -2.35 L142.9 -2.55 L144.2 -2.72 L145.4 -2.69 L146.6 -2.28 L147.8 -2.25 L149.0 -1.96 L150.2 -1.87 L151.4 -1.81 L152.6 -1.73 L153.8 -2.30 L155.1 -2.40 L156.3 -2.23 L157.5 -2.50 L158.7 -2.18 L159.9 -1.99 L161.1 -2.58 L162.3 -2.83 L163.5 -2.75 L164.7 -2.70 L166.0 -2.50 L167.2 -2.74 L168.4 -2.80 L169.6 -2.67 L170.8 -2.77 L172.0 -2.98 L173.2 -2.84 L174.4 -2.29 L175.6 -1.97 L176.9 -1.88 L178.1 -1.76 L179.3 -2.44 L180.5 -2.69 L181.7 -2.25 L182.9 -1.98 L184.1 -2.45 L185.3 -2.50 L186.5 -2.16 L187.8 -2.02 L189.0 -2.12 L190.2 -2.31 L191.4 -2.34 L192.6 -2.08 L193.8 -1.99 L195.0 -2.44 L196.2 -2.78 L197.5 -2.60 L198.7 -2.57 L199.9 -2.78 L201.1 -2.74 L202.3 -2.55 L203.5 -2.79 L204.7 -2.93 L205.9 -2.95 L207.1 -2.48 L208.4 -2.34 L209.6 -2.26 L210.8 -2.17 L212.0 -2.38 L213.2 -2.73 L214.4 -2.47 L215.6 -2.76 L216.8 -2.60 L218.0 -2.52 L219.3 -2.45 L220.5 -2.82 L221.7 -2.68 L222.9 -2.66 L224.1 -2.18 L225.3 -1.98 L226.5 -2.37 L227.7 -2.39 L228.9 -2.54 L230.2 -2.14 L231.4 -2.40 L232.6 -2.28 L233.8 -2.52 L235.0 -2.20 L236.2 -2.40 L237.4 -2.59 L238.6 -2.18 L239.8 -2.26 L241.1 -2.39 L242.3 -2.77 L243.5 -2.91 L244.7 -2.26 L245.9 -1.95 L247.1 -2.14 L248.3 -2.09 L249.5 -2.15 L250.8 -1.96 L252.0 -2.08 L253.2 -1.96 L254.4 -2.15 L255.6 -1.89 L256.8 -2.42 L258.0 -2.36 L259.2 -2.78 L260.4 -2.73 L261.7 -2.22 L262.9 -2.48 L264.1 -2.83 L265.3 -2.05 L266.5 -2.01 L266.5 2.03 L265.3 2.17 L264.1 2.81 L262.9 2.65 L261.7 2.29 L260.4 2.55 L259.2 2.88 L258.0 2.42 L256.8 2.46 L255.6 1.75 L254.4 2.28 L253.2 1.96 L252.0 2.09 L250.8 1.86 L249.5 2.00 L248.3 1.94 L247.1 2.05 L245.9 1.90 L244.7 2.14 L243.5 2.72 L242.3 2.86 L241.1 2.46 L239.8 2.39 L238.6 2.09 L237.4 2.68 L236.2 2.44 L235.0 2.07 L233.8 2.67 L232.6 2.23 L231.4 2.29 L230.2 2.04 L228.9 2.71 L227.7 2.29 L226.5 2.32 L225.3 1.99 L224.1 2.14 L222.9 2.72 L221.7 2.52 L220.5 2.79 L219.3 2.48 L218.0 2.56 L216.8 2.64 L215.6 2.67 L214.4 2.52 L213.2 2.93 L212.0 2.38 L210.8 2.22 L209.6 2.37 L208.4 2.25 L207.1 2.39 L205.9 3.16 L204.7 2.84 L203.5 2.76 L202.3 2.50 L201.1 2.95 L199.9 2.80 L198.7 2.73 L197.5 2.47 L196.2 2.69 L195.0 2.50 L193.8 1.94 L192.6 2.13 L191.4 2.34 L190.2 2.16 L189.0 2.00 L187.8 2.00 L186.5 2.17 L185.3 2.38 L184.1 2.37 L182.9 1.83 L181.7 2.18 L180.5 2.61 L179.3 2.40 L178.1 1.79 L176.9 1.98 L175.6 2.04 L174.4 2.38 L173.2 2.75 L172.0 2.98 L170.8 2.86 L169.6 2.83 L168.4 2.69 L167.2 2.54 L166.0 2.33 L164.7 2.70 L163.5 2.91 L162.3 2.68 L161.1 2.69 L159.9 2.03 L158.7 2.30 L157.5 2.65 L156.3 2.10 L155.1 2.51 L153.8 2.17 L152.6 1.63 L151.4 1.79 L150.2 1.87 L149.0 1.83 L147.8 2.17 L146.6 2.17 L145.4 2.54 L144.2 2.55 L142.9 2.37 L141.7 2.25 L140.5 2.16 L139.3 2.17 L138.1 2.25 L136.9 2.52 L135.7 2.09 L134.5 2.14 L133.2 2.57 L132.0 1.90 L130.8 1.94 L129.6 1.74 L128.4 1.90 L127.2 1.77 L126.0 2.01 L124.8 2.42 L123.6 2.58 L122.3 2.70 L121.1 2.56 L119.9 2.93 L118.7 2.54 L117.5 2.27 L116.3 2.15 L115.1 2.47 L113.9 2.36 L112.7 3.09 L111.4 2.86 L110.2 2.98 L109.0 3.03 L107.8 2.55 L106.6 2.05 L105.4 2.31 L104.2 2.92 L103.0 2.62 L101.8 2.23 L100.5 2.82 L99.3 2.71 L98.1 2.64 L96.9 1.90 L95.7 2.14 L94.5 2.34 L93.3 2.25 L92.1 2.10 L90.9 2.30 L89.6 2.41 L88.4 1.88 L87.2 2.16 L86.0 2.57 L84.8 2.61 L83.6 2.33 L82.4 2.19 L81.2 2.69 L80.0 1.88 L78.7 2.00 L77.5 2.03 L76.3 2.34 L75.1 2.42 L73.9 2.73 L72.7 2.59 L71.5 2.90 L70.3 2.85 L69.0 2.56 L67.8 2.52 L66.6 2.41 L65.4 2.32 L64.2 2.14 L63.0 2.59 L61.8 1.98 L60.6 2.15 L59.4 2.13 L58.1 2.02 L56.9 2.19 L55.7 2.61 L54.5 2.64 L53.3 2.56 L52.1 2.66 L50.9 2.62 L49.7 2.67 L48.5 2.76 L47.2 3.16 L46.0 2.80 L44.8 2.31 L43.6 1.79 L42.4 2.18 L41.2 2.29 L40.0 2.31 L38.8 2.49 L37.6 2.43 L36.3 2.25 L35.1 1.96 L33.9 2.33 L32.7 2.20 L31.5 2.26 L30.3 2.91 L29.1 2.45 L27.9 2.28 L26.7 2.37 L25.4 2.60 L24.2 2.47 L23.0 2.55 L21.8 2.42 L20.6 2.31 L19.4 2.70 L18.2 2.35 L17.0 2.13 L15.7 2.69 L14.5 2.34 L13.3 2.74 L12.1 2.58 L10.9 2.65 L9.7 2.20 L8.5 2.45 L7.3 2.33 L6.1 2.27 L4.8 2.21 L3.6 2.34 L2.4 2.11 L1.2 2.05 L0.0 1.96 Z" fill="#efefef"/></g></svg>
<div class="abs" style="left:0;top:673.00px;width:340px;height:28.07px;background:#905b5f"></div>
<div class="t" style="left:4.6px;top:680.40px;font-size:13.3px;letter-spacing:0px;color:#f4f4f4">Pista-5</div>
<svg class="abs" style="left:317px;top:677.50px" width="19" height="19"><circle cx="9.5" cy="9.5" r="7.6" stroke="#dedede" stroke-width="1.35" fill="none"/><path d="M7.8 6.3L12.6 9.5L7.8 12.7Z" fill="#dedede"/></svg>
<div class="abs" style="left:0;top:700.67px;width:340px;height:65.12px;background:#e5737b"></div>
<svg class="abs" style="left:4px;top:704.67px" width="57" height="57" viewBox="0 0 57 57" preserveAspectRatio="none"><defs><filter id="bl50"><feGaussianBlur stdDeviation="0.7"/></filter></defs><g filter="url(#bl50)"><rect width="57" height="57" fill="#bcbcbc"/><path d="M0 0H12L0 12Z" fill="#222"/><path d="M45 0H57V10Z" fill="#222"/><path d="M7 18Q10 8 29 8Q49 8 52 18L54 50Q50 57 29 57Q8 57 5 50Z" fill="#54321e"/><rect x="22" y="0" width="15" height="9" rx="6" fill="#17120f"/><path d="M6 36Q29 30 54 36L54 52Q29 60 6 52Z" fill="#1e140e"/><rect x="13" y="26" width="8" height="3" fill="#8c8c8c"/><rect x="38" y="26" width="8" height="3" fill="#8c8c8c"/><rect x="0" y="52" width="57" height="5" fill="#6a4a30"/></g><circle cx="28.5" cy="28" r="14.3" stroke="#e5737b" stroke-width="3.9" fill="none"/><path d="M25 21L35 28L25 35Z" fill="#e5737b"/></svg>
<div class="t" style="left:67.2px;top:703.67px;font-size:11.7px;color:#f6f6f6;letter-spacing:0px;width:241px;overflow:hidden;text-overflow:ellipsis;letter-spacing:-0.1px">ouaraaaaaaaaaaaaaaaaaaaaaaaaaaaaaaaaaaaaaaaaaaaaaaaaaaaaaaaa</div>
<div class="t" style="right:683.10px;top:704.07px;font-size:11.4px;color:#f6f6f6;background:#e5737b;padding-left:1px;letter-spacing:-0.1px">1.79s</div>
<svg class="abs" style="left:67px;top:715.67px" width="267" height="30"><g transform="translate(0,15)"><path d="M0 0 L0.0 -1.95 L1.2 -2.13 L2.4 -2.66 L3.6 -2.23 L4.8 -2.00 L6.1 -1.91 L7.3 -2.19 L8.5 -2.06 L9.7 -2.44 L10.9 -2.59 L12.1 -3.02 L13.3 -3.13 L14.5 -2.55 L15.7 -2.40 L17.0 -2.21 L18.2 -2.53 L19.4 -2.61 L20.6 -2.21 L21.8 -2.57 L23.0 -2.42 L24.2 -2.47 L25.4 -2.80 L26.7 -2.47 L27.9 -2.56 L29.1 -2.78 L30.3 -3.12 L31.5 -2.79 L32.7 -2.38 L33.9 -2.08 L35.1 -2.58 L36.3 -2.93 L37.6 -2.94 L38.8 -2.84 L40.0 -3.03 L41.2 -2.79 L42.4 -2.30 L43.6 -2.58 L44.8 -2.88 L46.0 -2.64 L47.2 -2.19 L48.5 -2.10 L49.7 -1.95 L50.9 -1.94 L52.1 -2.17 L53.3 -2.01 L54.5 -2.35 L55.7 -2.76 L56.9 -2.48 L58.1 -2.41 L59.4 -2.92 L60.6 -2.47 L61.8 -2.29 L63.0 -2.53 L64.2 -2.12 L65.4 -2.24 L66.6 -2.83 L67.8 -2.73 L69.0 -2.82 L70.3 -3.07 L71.5 -3.17 L72.7 -2.79 L73.9 -2.34 L75.1 -2.07 L76.3 -2.08 L77.5 -2.19 L78.7 -1.95 L80.0 -1.91 L81.2 -1.83 L82.4 -2.32 L83.6 -2.24 L84.8 -2.30 L86.0 -2.76 L87.2 -2.65 L88.4 -2.25 L89.6 -2.28 L90.9 -2.74 L92.1 -2.24 L93.3 -2.45 L94.5 -2.56 L95.7 -2.61 L96.9 -2.93 L98.1 -2.55 L99.3 -2.28 L100.5 -2.47 L101.8 -2.38 L103.0 -2.77 L104.2 -3.00 L105.4 -3.09 L106.6 -2.60 L107.8 -2.47 L109.0 -2.11 L110.2 -2.14 L111.4 -2.78 L112.7 -3.08 L113.9 -3.25 L115.1 -2.67 L116.3 -2.36 L117.5 -2.59 L118.7 -2.90 L119.9 -2.89 L121.1 -2.37 L122.3 -2.85 L123.6 -2.95 L124.8 -2.49 L126.0 -2.39 L127.2 -2.92 L128.4 -2.67 L129.6 -2.84 L130.8 -2.38 L132.0 -2.86 L133.2 -2.41 L134.5 -2.94 L135.7 -2.63 L136.9 -2.28 L138.1 -2.87 L139.3 -2.76 L140.5 -2.62 L141.7 -2.90 L142.9 -2.53 L144.2 -2.33 L145.4 -2.25 L146.6 -2.09 L147.8 -2.21 L149.0 -2.48 L150.2 -2.47 L151.4 -2.54 L152.6 -2.59 L153.8 -2.54 L155.1 -2.12 L156.3 -2.07 L157.5 -2.54 L158.7 -2.41 L159.9 -2.56 L161.1 -2.22 L162.3 -2.19 L163.5 -2.64 L164.7 -2.67 L166.0 -3.01 L167.2 -2.91 L168.4 -2.76 L169.6 -2.64 L170.8 -2.60 L172.0 -2.78 L173.2 -3.09 L174.4 -2.90 L175.6 -3.05 L176.9 -2.49 L178.1 -2.16 L179.3 -2.00 L180.5 -2.55 L181.7 -2.27 L182.9 -2.58 L184.1 -2.93 L185.3 -2.51 L186.5 -2.47 L187.8 -2.97 L189.0 -2.48 L190.2 -2.56 L191.4 -2.30 L192.6 -2.65 L193.8 -2.67 L195.0 -2.20 L196.2 -2.51 L197.5 -2.16 L198.7 -2.64 L199.9 -2.27 L201.1 -2.02 L202.3 -2.10 L203.5 -2.28 L204.7 -2.73 L205.9 -2.35 L207.1 -2.54 L208.4 -2.20 L209.6 -2.57 L210.8 -2.20 L212.0 -2.52 L213.2 -2.19 L214.4 -2.00 L215.6 -2.26 L216.8 -2.48 L218.0 -2.33 L219.3 -2.49 L220.5 -2.19 L221.7 -1.99 L222.9 -2.13 L224.1 -2.60 L225.3 -2.60 L226.5 -2.46 L227.7 -2.31 L228.9 -2.66 L230.2 -2.35 L231.4 -2.87 L232.6 -3.02 L233.8 -2.81 L235.0 -2.61 L236.2 -2.77 L237.4 -2.54 L238.6 -2.76 L239.8 -2.59 L241.1 -2.20 L242.3 -2.01 L243.5 -2.09 L244.7 -1.97 L245.9 -2.62 L247.1 -2.41 L248.3 -2.32 L249.5 -2.15 L250.8 -2.16 L252.0 -2.81 L253.2 -2.47 L254.4 -2.37 L255.6 -2.03 L256.8 -2.29 L258.0 -2.18 L259.2 -1.94 L260.4 -1.90 L261.7 -1.84 L262.9 -2.04 L264.1 -2.40 L265.3 -2.18 L266.5 -2.29 L266.5 2.25 L265.3 2.12 L264.1 2.57 L262.9 1.94 L261.7 1.90 L260.4 1.94 L259.2 1.81 L258.0 2.29 L256.8 2.43 L255.6 2.07 L254.4 2.45 L253.2 2.59 L252.0 2.65 L250.8 2.17 L249.5 2.15 L248.3 2.44 L247.1 2.52 L245.9 2.75 L244.7 1.99 L243.5 2.21 L242.3 2.07 L241.1 2.26 L239.8 2.49 L238.6 2.56 L237.4 2.40 L236.2 2.71 L235.0 2.45 L233.8 2.95 L232.6 3.05 L231.4 2.92 L230.2 2.40 L228.9 2.74 L227.7 2.30 L226.5 2.28 L225.3 2.71 L224.1 2.69 L222.9 2.13 L221.7 2.00 L220.5 2.25 L219.3 2.33 L218.0 2.41 L216.8 2.39 L215.6 2.12 L214.4 1.93 L213.2 2.26 L212.0 2.41 L210.8 2.28 L209.6 2.75 L208.4 2.20 L207.1 2.49 L205.9 2.34 L204.7 2.80 L203.5 2.37 L202.3 2.14 L201.1 2.06 L199.9 2.12 L198.7 2.50 L197.5 2.08 L196.2 2.60 L195.0 2.14 L193.8 2.70 L192.6 2.46 L191.4 2.15 L190.2 2.47 L189.0 2.55 L187.8 3.06 L186.5 2.53 L185.3 2.44 L184.1 2.94 L182.9 2.56 L181.7 2.25 L180.5 2.41 L179.3 2.11 L178.1 2.06 L176.9 2.67 L175.6 3.25 L174.4 2.69 L173.2 3.07 L172.0 2.91 L170.8 2.78 L169.6 2.62 L168.4 2.67 L167.2 2.78 L166.0 3.21 L164.7 2.56 L163.5 2.67 L162.3 2.07 L161.1 2.23 L159.9 2.73 L158.7 2.28 L157.5 2.66 L156.3 2.07 L155.1 2.25 L153.8 2.62 L152.6 2.48 L151.4 2.69 L150.2 2.46 L149.0 2.31 L147.8 2.05 L146.6 2.09 L145.4 2.23 L144.2 2.26 L142.9 2.39 L141.7 2.84 L140.5 2.55 L139.3 2.90 L138.1 2.65 L136.9 2.37 L135.7 2.77 L134.5 2.77 L133.2 2.56 L132.0 2.95 L130.8 2.53 L129.6 2.75 L128.4 2.62 L127.2 2.87 L126.0 2.57 L124.8 2.52 L123.6 2.89 L122.3 2.82 L121.1 2.29 L119.9 2.69 L118.7 2.73 L117.5 2.72 L116.3 2.29 L115.1 2.85 L113.9 3.13 L112.7 2.97 L111.4 2.78 L110.2 2.04 L109.0 2.07 L107.8 2.64 L106.6 2.75 L105.4 3.23 L104.2 3.06 L103.0 2.94 L101.8 2.54 L100.5 2.49 L99.3 2.35 L98.1 2.38 L96.9 3.03 L95.7 2.59 L94.5 2.66 L93.3 2.50 L92.1 2.17 L90.9 2.55 L89.6 2.43 L88.4 2.13 L87.2 2.64 L86.0 2.70 L84.8 2.23 L83.6 2.32 L82.4 2.48 L81.2 1.76 L80.0 1.96 L78.7 1.89 L77.5 2.21 L76.3 2.04 L75.1 1.97 L73.9 2.22 L72.7 2.67 L71.5 3.37 L70.3 3.07 L69.0 2.70 L67.8 2.89 L66.6 3.04 L65.4 2.22 L64.2 2.00 L63.0 2.41 L61.8 2.15 L60.6 2.41 L59.4 2.74 L58.1 2.32 L56.9 2.39 L55.7 2.79 L54.5 2.49 L53.3 2.08 L52.1 2.14 L50.9 1.92 L49.7 1.96 L48.5 2.06 L47.2 2.14 L46.0 2.46 L44.8 2.78 L43.6 2.76 L42.4 2.17 L41.2 2.79 L40.0 3.09 L38.8 3.00 L37.6 2.81 L36.3 2.83 L35.1 2.48 L33.9 2.04 L32.7 2.36 L31.5 2.98 L30.3 3.29 L29.1 2.94 L27.9 2.37 L26.7 2.30 L25.4 2.89 L24.2 2.61 L23.0 2.41 L21.8 2.60 L20.6 2.04 L19.4 2.57 L18.2 2.69 L17.0 2.32 L15.7 2.53 L14.5 2.73 L13.3 3.02 L12.1 2.85 L10.9 2.46 L9.7 2.45 L8.5 2.11 L7.3 2.33 L6.1 1.98 L4.8 2.04 L3.6 2.32 L2.4 2.64 L1.2 2.14 L0.0 1.82 Z" fill="#efefef"/></g></svg>
<div class="abs" style="left:0;top:765.39px;width:340px;height:28.07px;background:#806574"></div>
<div class="t" style="left:4.6px;top:772.79px;font-size:13.3px;letter-spacing:0px;color:#f4f4f4">Pista-6</div>
<svg class="abs" style="left:317px;top:769.89px" width="19" height="19"><circle cx="9.5" cy="9.5" r="7.6" stroke="#dedede" stroke-width="1.35" fill="none"/><path d="M7.8 6.3L12.6 9.5L7.8 12.7Z" fill="#dedede"/></svg>
<div class="abs" style="left:0;top:793.06px;width:340px;height:65.12px;background:#c489a8"></div>
<svg class="abs" style="left:4px;top:797.06px" width="57" height="57" viewBox="0 0 57 57" preserveAspectRatio="none"><defs><filter id="bl60"><feGaussianBlur stdDeviation="0.7"/></filter></defs><g filter="url(#bl60)"><rect width="57" height="57" fill="#c9a845"/><rect x="46" y="0" width="11" height="18" fill="#8cbc40"/><rect x="48" y="40" width="9" height="17" fill="#c8c070"/><path d="M0 0H50Q56 16 48 26L44 24L38 32L12 30L4 36L0 34Z" fill="#1d1b1c"/><path d="M14 20L44 20L46 40Q30 48 14 40Z" fill="#c4b49c"/><path d="M6 44Q30 36 50 42L50 52Q30 56 6 52Z" fill="#3a4c7c"/><path d="M0 52H57V57H0Z" fill="#b8ac98"/><path d="M4 40L12 40L8 52L2 52Z" fill="#b8ac98"/></g><circle cx="28.5" cy="28" r="14.3" stroke="#c489a8" stroke-width="3.9" fill="none"/><path d="M25 21L35 28L25 35Z" fill="#c489a8"/></svg>
<div class="t" style="left:67.2px;top:796.06px;font-size:11.7px;color:#f6f6f6;letter-spacing:0.14px;">04 - Song of Yimeng Mountain.mp3</div>
<div class="t" style="right:683.10px;top:796.46px;font-size:11.4px;color:#f6f6f6;background:#c489a8;padding-left:1px;letter-spacing:-0.1px">10.51s</div>
<svg class="abs" style="left:67px;top:808.06px" width="267" height="30"><g transform="translate(0,15)"><path d="M0 0 L0.0 -2.85 L1.2 -2.79 L2.4 -3.44 L3.6 -3.91 L4.8 -4.06 L6.1 -4.10 L7.3 -4.16 L8.5 -3.98 L9.7 -3.92 L10.9 -4.42 L12.1 -4.25 L13.3 -4.64 L14.5 -4.48 L15.7 -4.60 L17.0 -4.66 L18.2 -4.74 L19.4 -4.94 L20.6 -4.37 L21.8 -4.79 L23.0 -4.86 L24.2 -4.89 L25.4 -4.80 L26.7 -4.87 L27.9 -4.65 L29.1 -4.44 L30.3 -4.74 L31.5 -4.65 L32.7 -4.12 L33.9 -4.16 L35.1 -3.98 L36.3 -3.93 L37.6 -3.61 L38.8 -3.35 L40.0 -3.32 L41.2 -3.36 L42.4 -3.56 L43.6 -3.42 L44.8 -3.49 L46.0 -3.28 L47.2 -3.22 L48.5 -3.42 L49.7 -3.22 L50.9 -3.15 L52.1 -3.22 L53.3 -3.32 L54.5 -3.12 L55.7 -3.03 L56.9 -3.10 L58.1 -3.21 L59.4 -3.50 L60.6 -3.16 L61.8 -3.17 L63.0 -3.35 L64.2 -3.55 L65.4 -3.58 L66.6 -3.61 L67.8 -3.67 L69.0 -3.71 L70.3 -3.32 L71.5 -3.25 L72.7 -3.30 L73.9 -3.25 L75.1 -3.05 L76.3 -3.11 L77.5 -3.13 L78.7 -3.28 L80.0 -3.19 L81.2 -3.06 L82.4 -3.10 L83.6 -3.25 L84.8 -3.27 L86.0 -3.16 L87.2 -2.96 L88.4 -3.19 L89.6 -3.28 L90.9 -3.08 L92.1 -3.23 L93.3 -2.94 L94.5 -3.24 L95.7 -3.40 L96.9 -3.12 L98.1 -3.14 L99.3 -3.06 L100.5 -3.26 L101.8 -3.24 L103.0 -3.31 L104.2 -3.37 L105.4 -3.16 L106.6 -3.29 L107.8 -3.07 L109.0 -3.24 L110.2 -3.37 L111.4 -3.37 L112.7 -3.14 L113.9 -3.08 L115.1 -3.23 L116.3 -2.91 L117.5 -2.85 L118.7 -2.74 L119.9 -2.76 L121.1 -3.03 L122.3 -2.90 L123.6 -2.90 L124.8 -3.18 L126.0 -3.20 L127.2 -3.24 L128.4 -3.27 L129.6 -3.26 L130.8 -3.05 L132.0 -3.14 L133.2 -3.25 L134.5 -2.91 L135.7 -3.02 L136.9 -2.95 L138.1 -3.14 L139.3 -2.82 L140.5 -3.05 L141.7 -2.89 L142.9 -3.10 L144.2 -3.07 L145.4 -3.14 L146.6 -3.12 L147.8 -2.91 L149.0 -2.82 L150.2 -2.85 L151.4 -2.96 L152.6 -2.74 L153.8 -2.73 L155.1 -2.93 L156.3 -2.74 L157.5 -2.62 L158.7 -2.53 L159.9 -2.70 L161.1 -2.92 L162.3 -2.77 L163.5 -2.90 L164.7 -2.88 L166.0 -3.08 L167.2 -2.75 L168.4 -2.71 L169.6 -2.87 L170.8 -3.01 L172.0 -2.94 L173.2 -3.06 L174.4 -3.10 L175.6 -3.02 L176.9 -2.87 L178.1 -2.97 L179.3 -2.75 L180.5 -2.72 L181.7 -2.88 L182.9 -3.03 L184.1 -3.08 L185.3 -2.74 L186.5 -2.85 L187.8 -2.84 L189.0 -2.70 L190.2 -2.62 L191.4 -2.56 L192.6 -2.67 L193.8 -2.75 L195.0 -2.54 L196.2 -2.40 L197.5 -2.48 L198.7 -2.78 L199.9 -2.95 L201.1 -2.83 L202.3 -2.96 L203.5 -3.01 L204.7 -2.79 L205.9 -2.56 L207.1 -2.49 L208.4 -2.69 L209.6 -2.70 L210.8 -2.45 L212.0 -2.70 L213.2 -2.39 L214.4 -2.40 L215.6 -2.50 L216.8 -2.59 L218.0 -2.70 L219.3 -2.66 L220.5 -2.76 L221.7 -2.82 L222.9 -2.73 L224.1 -2.69 L225.3 -2.63 L226.5 -2.49 L227.7 -2.47 L228.9 -2.41 L230.2 -2.55 L231.4 -2.33 L232.6 -2.19 L233.8 -2.45 L235.0 -2.52 L236.2 -2.67 L237.4 -2.36 L238.6 -2.50 L239.8 -2.37 L241.1 -2.51 L242.3 -2.50 L243.5 -2.21 L244.7 -2.22 L245.9 -2.26 L247.1 -2.08 L248.3 -2.03 L249.5 -2.19 L250.8 -2.39 L252.0 -2.58 L253.2 -2.29 L254.4 -2.43 L255.6 -2.47 L256.8 -2.45 L258.0 -2.27 L259.2 -2.15 L260.4 -2.02 L261.7 -2.27 L262.9 -2.24 L264.1 -2.15 L265.3 -1.82 L266.5 -1.71 L266.5 1.76 L265.3 1.74 L264.1 2.25 L262.9 2.29 L261.7 2.39 L260.4 2.10 L259.2 2.15 L258.0 2.34 L256.8 2.39 L255.6 2.53 L254.4 2.28 L253.2 2.24 L252.0 2.58 L250.8 2.53 L249.5 2.25 L248.3 2.15 L247.1 2.19 L245.9 2.42 L244.7 2.26 L243.5 2.25 L242.3 2.49 L241.1 2.41 L239.8 2.48 L238.6 2.55 L237.4 2.24 L236.2 2.57 L235.0 2.41 L233.8 2.53 L232.6 2.22 L231.4 2.22 L230.2 2.62 L228.9 2.44 L227.7 2.38 L226.5 2.47 L225.3 2.83 L224.1 2.55 L222.9 2.62 L221.7 2.86 L220.5 2.90 L219.3 2.82 L218.0 2.66 L216.8 2.70 L215.6 2.36 L214.4 2.36 L213.2 2.52 L212.0 2.77 L210.8 2.43 L209.6 2.73 L208.4 2.68 L207.1 2.51 L205.9 2.70 L204.7 2.99 L203.5 2.87 L202.3 3.08 L201.1 3.02 L199.9 3.00 L198.7 2.78 L197.5 2.43 L196.2 2.40 L195.0 2.57 L193.8 2.80 L192.6 2.52 L191.4 2.76 L190.2 2.53 L189.0 2.72 L187.8 2.71 L186.5 2.90 L185.3 2.57 L184.1 3.00 L182.9 2.98 L181.7 2.80 L180.5 2.71 L179.3 2.61 L178.1 2.96 L176.9 3.00 L175.6 3.07 L174.4 3.32 L173.2 3.27 L172.0 2.93 L170.8 3.00 L169.6 2.98 L168.4 2.87 L167.2 2.76 L166.0 3.16 L164.7 2.96 L163.5 2.91 L162.3 2.78 L161.1 2.87 L159.9 2.68 L158.7 2.52 L157.5 2.74 L156.3 2.60 L155.1 2.76 L153.8 2.91 L152.6 2.74 L151.4 3.05 L150.2 3.03 L149.0 2.92 L147.8 2.94 L146.6 3.34 L145.4 3.20 L144.2 3.05 L142.9 2.95 L141.7 2.74 L140.5 3.18 L139.3 2.99 L138.1 3.07 L136.9 2.97 L135.7 3.10 L134.5 2.96 L133.2 3.14 L132.0 3.33 L130.8 3.07 L129.6 3.36 L128.4 3.36 L127.2 3.21 L126.0 3.30 L124.8 3.03 L123.6 2.92 L122.3 2.97 L121.1 3.09 L119.9 2.68 L118.7 2.61 L117.5 2.68 L116.3 2.75 L115.1 3.07 L113.9 3.08 L112.7 3.17 L111.4 3.47 L110.2 3.33 L109.0 3.37 L107.8 2.86 L106.6 3.22 L105.4 2.98 L104.2 3.38 L103.0 3.34 L101.8 3.28 L100.5 3.23 L99.3 3.00 L98.1 3.06 L96.9 2.94 L95.7 3.24 L94.5 3.23 L93.3 2.97 L92.1 3.04 L90.9 3.24 L89.6 3.04 L88.4 3.01 L87.2 2.94 L86.0 3.08 L84.8 3.28 L83.6 3.35 L82.4 3.14 L81.2 3.19 L80.0 3.17 L78.7 3.37 L77.5 3.10 L76.3 2.94 L75.1 2.86 L73.9 3.10 L72.7 3.27 L71.5 3.14 L70.3 3.35 L69.0 3.80 L67.8 3.90 L66.6 3.42 L65.4 3.82 L64.2 3.28 L63.0 3.54 L61.8 3.40 L60.6 3.09 L59.4 3.65 L58.1 3.21 L56.9 3.13 L55.7 3.19 L54.5 3.33 L53.3 3.22 L52.1 3.08 L50.9 3.35 L49.7 3.27 L48.5 3.63 L47.2 3.08 L46.0 3.45 L44.8 3.31 L43.6 3.24 L42.4 3.45 L41.2 3.57 L40.0 3.26 L38.8 3.32 L37.6 3.49 L36.3 3.68 L35.1 3.95 L33.9 4.16 L32.7 4.02 L31.5 4.81 L30.3 4.61 L29.1 4.76 L27.9 4.94 L26.7 4.93 L25.4 4.51 L24.2 4.93 L23.0 4.95 L21.8 4.90 L20.6 4.32 L19.4 5.11 L18.2 5.10 L17.0 4.81 L15.7 4.29 L14.5 4.57 L13.3 4.73 L12.1 4.28 L10.9 4.71 L9.7 3.66 L8.5 3.69 L7.3 4.30 L6.1 3.86 L4.8 3.84 L3.6 4.09 L2.4 3.37 L1.2 2.95 L0.0 2.98 Z" fill="#efefef"/></g></svg>
<div class="abs" style="left:0;top:857.78px;width:340px;height:28.07px;background:#746588"></div>
<div class="t" style="left:4.6px;top:865.18px;font-size:13.3px;letter-spacing:0px;color:#f4f4f4">Pista-7</div>
<svg class="abs" style="left:317px;top:862.28px" width="19" height="19"><circle cx="9.5" cy="9.5" r="7.6" stroke="#dedede" stroke-width="1.35" fill="none"/><path d="M7.8 6.3L12.6 9.5L7.8 12.7Z" fill="#dedede"/></svg>
<div class="abs" style="left:0;top:885.45px;width:340px;height:65.12px;background:#a989d4"></div>
<svg class="abs" style="left:4px;top:889.45px" width="57" height="57" viewBox="0 0 57 57" preserveAspectRatio="none"><defs><filter id="bl70"><feGaussianBlur stdDeviation="0.7"/></filter></defs><g filter="url(#bl70)"><rect width="57" height="57" fill="#7ea4c4"/><rect y="22" width="57" height="22" fill="#b0bcc6"/><rect y="44" width="57" height="13" fill="#58786a"/><path d="M0 14L14 22L18 34L8 40L0 36Z" fill="#1c181a"/><path d="M57 20L44 24L40 40L50 36L57 30Z" fill="#1e1a1c"/><path d="M22 4Q34 0 46 10L42 20L20 20Z" fill="#161216"/><path d="M30 12H44V16H30Z" fill="#8a1a1e"/><path d="M18 20L42 20L48 57L14 57Z" fill="#221a1e"/><path d="M26 22L40 22L42 44L28 46Z" fill="#7a1a1e"/><path d="M8 52L24 40L26 42L10 55Z" fill="#d86a6a"/><path d="M0 48L6 50L6 57L0 57Z" fill="#c02020"/></g><circle cx="28.5" cy="28" r="14.3" stroke="#a989d4" stroke-width="3.9" fill="none"/><path d="M25 21L35 28L25 35Z" fill="#a989d4"/></svg>
<div class="t" style="left:67.2px;top:888.45px;font-size:11.7px;color:#f6f6f6;letter-spacing:0.13px;">huerto del rey moro entrevista .mp3</div>
<div class="t" style="right:682.80px;top:888.85px;font-size:11.4px;color:#f6f6f6;background:#a989d4;padding-left:1px;letter-spacing:0.2px">47.94s</div>
<svg class="abs" style="left:67px;top:900.45px" width="267" height="30"><g transform="translate(0,15)"><path d="M0 0 L0.0 -2.53 L1.2 -2.26 L2.4 -2.52 L3.6 -3.26 L4.8 -3.28 L6.1 -2.78 L7.3 -3.19 L8.5 -3.42 L9.7 -3.05 L10.9 -3.13 L12.1 -3.26 L13.3 -3.11 L14.5 -2.76 L15.7 -3.23 L17.0 -3.64 L18.2 -4.39 L19.4 -4.62 L20.6 -3.28 L21.8 -3.37 L23.0 -3.15 L24.2 -2.70 L25.4 -3.36 L26.7 -3.37 L27.9 -3.37 L29.1 -2.99 L30.3 -2.68 L31.5 -2.46 L32.7 -2.82 L33.9 -2.93 L35.1 -3.20 L36.3 -3.28 L37.6 -3.35 L38.8 -2.83 L40.0 -3.12 L41.2 -2.93 L42.4 -3.56 L43.6 -3.59 L44.8 -3.13 L46.0 -2.71 L47.2 -3.13 L48.5 -3.44 L49.7 -3.18 L50.9 -3.47 L52.1 -4.54 L53.3 -4.92 L54.5 -4.50 L55.7 -3.46 L56.9 -3.20 L58.1 -2.78 L59.4 -2.60 L60.6 -2.42 L61.8 -3.12 L63.0 -3.37 L64.2 -3.52 L65.4 -3.09 L66.6 -3.05 L67.8 -3.48 L69.0 -3.51 L70.3 -3.70 L71.5 -3.00 L72.7 -2.77 L73.9 -3.47 L75.1 -2.85 L76.3 -2.75 L77.5 -3.38 L78.7 -4.24 L80.0 -5.13 L81.2 -4.12 L82.4 -3.37 L83.6 -3.16 L84.8 -3.43 L86.0 -3.70 L87.2 -3.67 L88.4 -3.81 L89.6 -3.11 L90.9 -3.18 L92.1 -3.32 L93.3 -3.54 L94.5 -2.88 L95.7 -3.00 L96.9 -2.99 L98.1 -3.08 L99.3 -3.17 L100.5 -2.72 L101.8 -3.35 L103.0 -3.30 L104.2 -3.66 L105.4 -3.57 L106.6 -3.19 L107.8 -3.45 L109.0 -3.80 L110.2 -4.45 L111.4 -4.85 L112.7 -5.03 L113.9 -3.84 L115.1 -3.47 L116.3 -3.61 L117.5 -3.49 L118.7 -3.52 L119.9 -2.93 L121.1 -3.17 L122.3 -2.75 L123.6 -2.95 L124.8 -2.60 L126.0 -2.73 L127.2 -2.48 L128.4 -2.93 L129.6 -3.55 L130.8 -2.98 L132.0 -2.82 L133.2 -2.70 L134.5 -2.56 L135.7 -3.32 L136.9 -3.13 L138.1 -3.13 L139.3 -3.04 L140.5 -2.86 L141.7 -3.11 L142.9 -3.42 L144.2 -3.40 L145.4 -4.43 L146.6 -5.15 L147.8 -4.64 L149.0 -3.50 L150.2 -3.12 L151.4 -3.55 L152.6 -3.75 L153.8 -3.86 L155.1 -4.04 L156.3 -3.61 L157.5 -4.03 L158.7 -4.55 L159.9 -4.43 L161.1 -4.08 L162.3 -3.84 L163.5 -3.32 L164.7 -3.11 L166.0 -2.81 L167.2 -2.69 L168.4 -3.10 L169.6 -3.28 L170.8 -3.19 L172.0 -3.45 L173.2 -3.56 L174.4 -3.42 L175.6 -2.83 L176.9 -2.99 L178.1 -2.92 L179.3 -3.07 L180.5 -3.35 L181.7 -3.31 L182.9 -2.77 L184.1 -2.52 L185.3 -2.53 L186.5 -3.19 L187.8 -3.34 L189.0 -3.66 L190.2 -3.07 L191.4 -3.00 L192.6 -3.01 L193.8 -3.17 L195.0 -4.36 L196.2 -4.48 L197.5 -4.43 L198.7 -5.39 L199.9 -5.92 L201.1 -4.91 L202.3 -5.11 L203.5 -4.34 L204.7 -4.18 L205.9 -3.77 L207.1 -3.78 L208.4 -3.15 L209.6 -3.34 L210.8 -2.90 L212.0 -3.09 L213.2 -2.86 L214.4 -3.22 L215.6 -3.56 L216.8 -3.81 L218.0 -3.50 L219.3 -3.66 L220.5 -3.39 L221.7 -3.76 L222.9 -3.90 L224.1 -3.13 L225.3 -3.56 L226.5 -3.85 L227.7 -3.56 L228.9 -3.44 L230.2 -3.87 L231.4 -3.47 L232.6 -4.00 L233.8 -4.74 L235.0 -4.24 L236.2 -3.55 L237.4 -3.63 L238.6 -3.77 L239.8 -3.13 L241.1 -3.23 L242.3 -3.38 L243.5 -3.37 L244.7 -3.58 L245.9 -3.04 L247.1 -3.58 L248.3 -3.18 L249.5 -2.87 L250.8 -3.17 L252.0 -3.65 L253.2 -3.18 L254.4 -3.64 L255.6 -2.93 L256.8 -2.63 L258.0 -2.73 L259.2 -2.81 L260.4 -3.74 L261.7 -3.90 L262.9 -3.01 L264.1 -3.40 L265.3 -2.75 L266.5 -2.99 L266.5 2.77 L265.3 2.85 L264.1 3.25 L262.9 2.80 L261.7 3.62 L260.4 3.94 L259.2 2.90 L258.0 2.67 L256.8 2.65 L255.6 3.02 L254.4 3.41 L253.2 3.28 L252.0 3.76 L250.8 3.38 L249.5 2.68 L248.3 3.21 L247.1 3.58 L245.9 3.20 L244.7 3.50 L243.5 3.45 L242.3 3.58 L241.1 3.16 L239.8 3.13 L238.6 3.99 L237.4 3.38 L236.2 3.80 L235.0 4.13 L233.8 4.71 L232.6 3.87 L231.4 3.63 L230.2 3.89 L228.9 3.57 L227.7 3.35 L226.5 4.07 L225.3 3.73 L224.1 3.22 L222.9 3.74 L221.7 3.63 L220.5 3.37 L219.3 3.42 L218.0 3.74 L216.8 3.76 L215.6 3.80 L214.4 3.06 L213.2 2.93 L212.0 3.23 L210.8 2.97 L209.6 3.30 L208.4 2.92 L207.1 3.75 L205.9 3.70 L204.7 4.46 L203.5 4.65 L202.3 5.46 L201.1 5.27 L199.9 5.63 L198.7 5.01 L197.5 4.29 L196.2 4.15 L195.0 4.11 L193.8 3.21 L192.6 2.88 L191.4 3.05 L190.2 3.01 L189.0 3.54 L187.8 3.58 L186.5 3.04 L185.3 2.67 L184.1 2.54 L182.9 2.83 L181.7 3.13 L180.5 3.48 L179.3 3.25 L178.1 2.78 L176.9 2.97 L175.6 2.90 L174.4 3.41 L173.2 3.70 L172.0 3.53 L170.8 3.10 L169.6 3.37 L168.4 3.23 L167.2 2.68 L166.0 2.85 L164.7 3.17 L163.5 3.31 L162.3 3.60 L161.1 4.02 L159.9 4.61 L158.7 4.71 L157.5 3.78 L156.3 3.60 L155.1 4.09 L153.8 3.87 L152.6 3.55 L151.4 3.63 L150.2 3.21 L149.0 3.52 L147.8 4.94 L146.6 5.21 L145.4 4.11 L144.2 3.29 L142.9 3.53 L141.7 2.91 L140.5 3.06 L139.3 3.13 L138.1 3.26 L136.9 2.98 L135.7 3.07 L134.5 2.71 L133.2 2.71 L132.0 2.80 L130.8 2.99 L129.6 3.69 L128.4 2.87 L127.2 2.58 L126.0 2.59 L124.8 2.79 L123.6 3.03 L122.3 2.68 L121.1 3.16 L119.9 3.10 L118.7 3.43 L117.5 3.60 L116.3 3.83 L115.1 3.71 L113.9 3.70 L112.7 5.25 L111.4 4.92 L110.2 4.66 L109.0 3.55 L107.8 3.41 L106.6 3.17 L105.4 3.74 L104.2 3.63 L103.0 3.07 L101.8 3.20 L100.5 2.85 L99.3 3.36 L98.1 3.11 L96.9 2.80 L95.7 3.12 L94.5 3.04 L93.3 3.43 L92.1 3.31 L90.9 3.08 L89.6 2.90 L88.4 3.95 L87.2 3.48 L86.0 3.48 L84.8 3.65 L83.6 2.96 L82.4 3.51 L81.2 4.32 L80.0 4.93 L78.7 4.16 L77.5 3.24 L76.3 2.83 L75.1 3.05 L73.9 3.60 L72.7 2.77 L71.5 3.02 L70.3 3.65 L69.0 3.62 L67.8 3.36 L66.6 2.93 L65.4 3.18 L64.2 3.39 L63.0 3.62 L61.8 3.23 L60.6 2.31 L59.4 2.41 L58.1 2.83 L56.9 3.03 L55.7 3.46 L54.5 4.56 L53.3 5.14 L52.1 4.46 L50.9 3.50 L49.7 3.33 L48.5 3.25 L47.2 3.05 L46.0 2.83 L44.8 3.06 L43.6 3.82 L42.4 3.34 L41.2 2.75 L40.0 3.06 L38.8 2.81 L37.6 3.28 L36.3 3.14 L35.1 3.18 L33.9 3.11 L32.7 3.01 L31.5 2.50 L30.3 2.58 L29.1 3.02 L27.9 3.19 L26.7 3.15 L25.4 3.50 L24.2 2.60 L23.0 2.99 L21.8 3.54 L20.6 3.09 L19.4 4.44 L18.2 4.16 L17.0 3.85 L15.7 3.32 L14.5 2.63 L13.3 2.91 L12.1 3.45 L10.9 2.96 L9.7 3.15 L8.5 3.52 L7.3 3.24 L6.1 2.77 L4.8 3.24 L3.6 3.15 L2.4 2.57 L1.2 2.14 L0.0 2.52 Z" fill="#efefef"/></g></svg>
<div class="abs" style="left:0;top:79px;width:1px;height:936px;background:rgba(0,0,0,0.12)"></div>
</body></html>
